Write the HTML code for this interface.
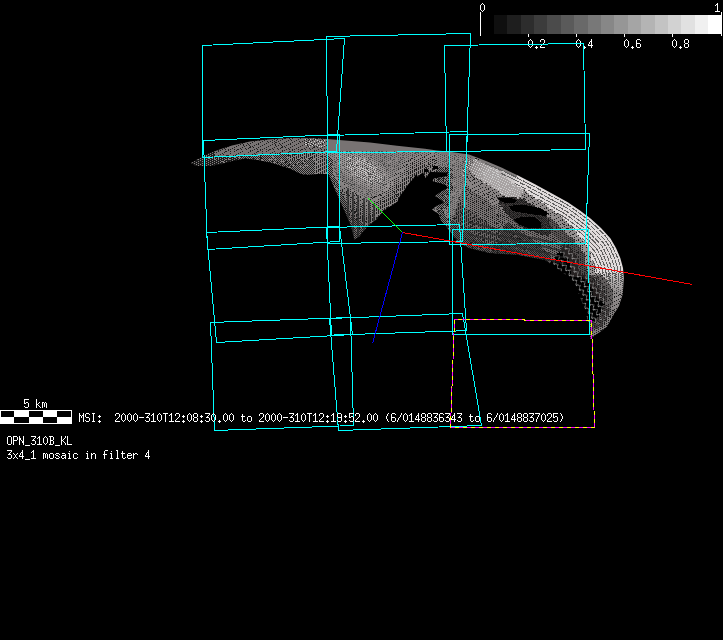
<!DOCTYPE html><html><head><meta charset="utf-8"><title>MSI mosaic</title>
<style>html,body{margin:0;padding:0;background:#000;overflow:hidden}body{width:723px;height:640px;font-family:"Liberation Mono",monospace}svg{display:block;position:absolute;left:0;top:0}</style></head><body>
<svg width="723" height="640" viewBox="0 0 723 640" shape-rendering="crispEdges">
<defs><path id="g40" d="M3 2h1v1h-1zM2 3h1v1h-1zM2 4h1v1h-1zM1 5h1v1h-1zM1 6h1v1h-1zM1 7h1v1h-1zM2 8h1v1h-1zM2 9h1v1h-1zM3 10h1v1h-1z"/><path id="g41" d="M1 2h1v1h-1zM2 3h1v1h-1zM2 4h1v1h-1zM3 5h1v1h-1zM3 6h1v1h-1zM3 7h1v1h-1zM2 8h1v1h-1zM2 9h1v1h-1zM1 10h1v1h-1z"/><path id="g45" d="M0 6h5v1h-5z"/><path id="g46" d="M2 9h1v1h-1zM1 10h3v1h-3zM2 11h1v1h-1z"/><path id="g47" d="M4 2h1v1h-1zM4 3h1v1h-1zM3 4h1v1h-1zM3 5h1v1h-1zM2 6h1v1h-1zM1 7h1v1h-1zM1 8h1v1h-1zM0 9h1v1h-1zM0 10h1v1h-1z"/><path id="g48" d="M2 2h1v1h-1zM1 3h1v1h-1zM3 3h1v1h-1zM0 4h1v1h-1zM4 4h1v1h-1zM0 5h1v1h-1zM4 5h1v1h-1zM0 6h1v1h-1zM4 6h1v1h-1zM0 7h1v1h-1zM4 7h1v1h-1zM0 8h1v1h-1zM4 8h1v1h-1zM1 9h1v1h-1zM3 9h1v1h-1zM2 10h1v1h-1z"/><path id="g49" d="M2 2h1v1h-1zM1 3h2v1h-2zM0 4h1v1h-1zM2 4h1v1h-1zM2 5h1v1h-1zM2 6h1v1h-1zM2 7h1v1h-1zM2 8h1v1h-1zM2 9h1v1h-1zM0 10h5v1h-5z"/><path id="g50" d="M1 2h3v1h-3zM0 3h1v1h-1zM4 3h1v1h-1zM0 4h1v1h-1zM4 4h1v1h-1zM4 5h1v1h-1zM3 6h1v1h-1zM2 7h1v1h-1zM1 8h1v1h-1zM0 9h1v1h-1zM0 10h5v1h-5z"/><path id="g51" d="M0 2h5v1h-5zM4 3h1v1h-1zM3 4h1v1h-1zM2 5h1v1h-1zM1 6h3v1h-3zM4 7h1v1h-1zM4 8h1v1h-1zM0 9h1v1h-1zM4 9h1v1h-1zM1 10h3v1h-3z"/><path id="g52" d="M3 2h1v1h-1zM3 3h1v1h-1zM2 4h2v1h-2zM1 5h1v1h-1zM3 5h1v1h-1zM1 6h1v1h-1zM3 6h1v1h-1zM0 7h1v1h-1zM3 7h1v1h-1zM0 8h5v1h-5zM3 9h1v1h-1zM3 10h1v1h-1z"/><path id="g53" d="M0 2h5v1h-5zM0 3h1v1h-1zM0 4h1v1h-1zM0 5h1v1h-1zM2 5h2v1h-2zM0 6h2v1h-2zM4 6h1v1h-1zM4 7h1v1h-1zM4 8h1v1h-1zM0 9h1v1h-1zM4 9h1v1h-1zM1 10h3v1h-3z"/><path id="g54" d="M1 2h3v1h-3zM0 3h1v1h-1zM4 3h1v1h-1zM0 4h1v1h-1zM0 5h1v1h-1zM0 6h4v1h-4zM0 7h1v1h-1zM4 7h1v1h-1zM0 8h1v1h-1zM4 8h1v1h-1zM0 9h1v1h-1zM4 9h1v1h-1zM1 10h3v1h-3z"/><path id="g55" d="M0 2h5v1h-5zM4 3h1v1h-1zM3 4h1v1h-1zM3 5h1v1h-1zM2 6h1v1h-1zM2 7h1v1h-1zM1 8h1v1h-1zM1 9h1v1h-1zM1 10h1v1h-1z"/><path id="g56" d="M1 2h3v1h-3zM0 3h1v1h-1zM4 3h1v1h-1zM0 4h1v1h-1zM4 4h1v1h-1zM0 5h1v1h-1zM4 5h1v1h-1zM1 6h3v1h-3zM0 7h1v1h-1zM4 7h1v1h-1zM0 8h1v1h-1zM4 8h1v1h-1zM0 9h1v1h-1zM4 9h1v1h-1zM1 10h3v1h-3z"/><path id="g57" d="M1 2h3v1h-3zM0 3h1v1h-1zM4 3h1v1h-1zM0 4h1v1h-1zM4 4h1v1h-1zM0 5h1v1h-1zM4 5h1v1h-1zM1 6h4v1h-4zM4 7h1v1h-1zM4 8h1v1h-1zM0 9h1v1h-1zM4 9h1v1h-1zM1 10h3v1h-3z"/><path id="g58" d="M2 4h1v1h-1zM1 5h3v1h-3zM2 6h1v1h-1zM2 9h1v1h-1zM1 10h3v1h-3zM2 11h1v1h-1z"/><path id="g66" d="M0 2h4v1h-4zM1 3h1v1h-1zM4 3h1v1h-1zM1 4h1v1h-1zM4 4h1v1h-1zM1 5h1v1h-1zM4 5h1v1h-1zM1 6h3v1h-3zM1 7h1v1h-1zM4 7h1v1h-1zM1 8h1v1h-1zM4 8h1v1h-1zM1 9h1v1h-1zM4 9h1v1h-1zM0 10h4v1h-4z"/><path id="g73" d="M1 2h3v1h-3zM2 3h1v1h-1zM2 4h1v1h-1zM2 5h1v1h-1zM2 6h1v1h-1zM2 7h1v1h-1zM2 8h1v1h-1zM2 9h1v1h-1zM1 10h3v1h-3z"/><path id="g75" d="M0 2h1v1h-1zM4 2h1v1h-1zM0 3h1v1h-1zM4 3h1v1h-1zM0 4h1v1h-1zM3 4h1v1h-1zM0 5h1v1h-1zM2 5h1v1h-1zM0 6h2v1h-2zM0 7h1v1h-1zM2 7h1v1h-1zM0 8h1v1h-1zM3 8h1v1h-1zM0 9h1v1h-1zM4 9h1v1h-1zM0 10h1v1h-1zM4 10h1v1h-1z"/><path id="g76" d="M0 2h1v1h-1zM0 3h1v1h-1zM0 4h1v1h-1zM0 5h1v1h-1zM0 6h1v1h-1zM0 7h1v1h-1zM0 8h1v1h-1zM0 9h1v1h-1zM0 10h5v1h-5z"/><path id="g77" d="M0 2h1v1h-1zM4 2h1v1h-1zM0 3h1v1h-1zM4 3h1v1h-1zM0 4h2v1h-2zM3 4h2v1h-2zM0 5h1v1h-1zM2 5h1v1h-1zM4 5h1v1h-1zM0 6h1v1h-1zM2 6h1v1h-1zM4 6h1v1h-1zM0 7h1v1h-1zM4 7h1v1h-1zM0 8h1v1h-1zM4 8h1v1h-1zM0 9h1v1h-1zM4 9h1v1h-1zM0 10h1v1h-1zM4 10h1v1h-1z"/><path id="g78" d="M0 2h1v1h-1zM4 2h1v1h-1zM0 3h1v1h-1zM4 3h1v1h-1zM0 4h2v1h-2zM4 4h1v1h-1zM0 5h2v1h-2zM4 5h1v1h-1zM0 6h1v1h-1zM2 6h1v1h-1zM4 6h1v1h-1zM0 7h1v1h-1zM3 7h2v1h-2zM0 8h1v1h-1zM3 8h2v1h-2zM0 9h1v1h-1zM4 9h1v1h-1zM0 10h1v1h-1zM4 10h1v1h-1z"/><path id="g79" d="M1 2h3v1h-3zM0 3h1v1h-1zM4 3h1v1h-1zM0 4h1v1h-1zM4 4h1v1h-1zM0 5h1v1h-1zM4 5h1v1h-1zM0 6h1v1h-1zM4 6h1v1h-1zM0 7h1v1h-1zM4 7h1v1h-1zM0 8h1v1h-1zM4 8h1v1h-1zM0 9h1v1h-1zM4 9h1v1h-1zM1 10h3v1h-3z"/><path id="g80" d="M0 2h4v1h-4zM0 3h1v1h-1zM4 3h1v1h-1zM0 4h1v1h-1zM4 4h1v1h-1zM0 5h1v1h-1zM4 5h1v1h-1zM0 6h4v1h-4zM0 7h1v1h-1zM0 8h1v1h-1zM0 9h1v1h-1zM0 10h1v1h-1z"/><path id="g83" d="M1 2h3v1h-3zM0 3h1v1h-1zM4 3h1v1h-1zM0 4h1v1h-1zM0 5h1v1h-1zM1 6h3v1h-3zM4 7h1v1h-1zM4 8h1v1h-1zM0 9h1v1h-1zM4 9h1v1h-1zM1 10h3v1h-3z"/><path id="g84" d="M0 2h5v1h-5zM2 3h1v1h-1zM2 4h1v1h-1zM2 5h1v1h-1zM2 6h1v1h-1zM2 7h1v1h-1zM2 8h1v1h-1zM2 9h1v1h-1zM2 10h1v1h-1z"/><path id="g95" d="M0 11h5v1h-5z"/><path id="g97" d="M1 5h3v1h-3zM4 6h1v1h-1zM1 7h4v1h-4zM0 8h1v1h-1zM4 8h1v1h-1zM0 9h1v1h-1zM3 9h2v1h-2zM1 10h2v1h-2zM4 10h1v1h-1z"/><path id="g99" d="M1 5h3v1h-3zM0 6h1v1h-1zM4 6h1v1h-1zM0 7h1v1h-1zM0 8h1v1h-1zM0 9h1v1h-1zM4 9h1v1h-1zM1 10h3v1h-3z"/><path id="g101" d="M1 5h3v1h-3zM0 6h1v1h-1zM4 6h1v1h-1zM0 7h5v1h-5zM0 8h1v1h-1zM0 9h1v1h-1zM4 9h1v1h-1zM1 10h3v1h-3z"/><path id="g102" d="M2 2h3v1h-3zM1 3h1v1h-1zM1 4h1v1h-1zM1 5h1v1h-1zM0 6h4v1h-4zM1 7h1v1h-1zM1 8h1v1h-1zM1 9h1v1h-1zM1 10h1v1h-1z"/><path id="g105" d="M2 3h1v1h-1zM1 5h2v1h-2zM2 6h1v1h-1zM2 7h1v1h-1zM2 8h1v1h-1zM2 9h1v1h-1zM1 10h3v1h-3z"/><path id="g107" d="M0 2h1v1h-1zM0 3h1v1h-1zM0 4h1v1h-1zM0 5h1v1h-1zM3 5h1v1h-1zM0 6h1v1h-1zM2 6h1v1h-1zM0 7h2v1h-2zM0 8h1v1h-1zM2 8h1v1h-1zM0 9h1v1h-1zM3 9h1v1h-1zM0 10h1v1h-1zM4 10h1v1h-1z"/><path id="g108" d="M1 2h2v1h-2zM2 3h1v1h-1zM2 4h1v1h-1zM2 5h1v1h-1zM2 6h1v1h-1zM2 7h1v1h-1zM2 8h1v1h-1zM2 9h1v1h-1zM1 10h3v1h-3z"/><path id="g109" d="M0 5h2v1h-2zM3 5h1v1h-1zM0 6h1v1h-1zM2 6h1v1h-1zM4 6h1v1h-1zM0 7h1v1h-1zM2 7h1v1h-1zM4 7h1v1h-1zM0 8h1v1h-1zM2 8h1v1h-1zM4 8h1v1h-1zM0 9h1v1h-1zM2 9h1v1h-1zM4 9h1v1h-1zM0 10h1v1h-1zM4 10h1v1h-1z"/><path id="g110" d="M0 5h1v1h-1zM2 5h2v1h-2zM0 6h2v1h-2zM4 6h1v1h-1zM0 7h1v1h-1zM4 7h1v1h-1zM0 8h1v1h-1zM4 8h1v1h-1zM0 9h1v1h-1zM4 9h1v1h-1zM0 10h1v1h-1zM4 10h1v1h-1z"/><path id="g111" d="M1 5h3v1h-3zM0 6h1v1h-1zM4 6h1v1h-1zM0 7h1v1h-1zM4 7h1v1h-1zM0 8h1v1h-1zM4 8h1v1h-1zM0 9h1v1h-1zM4 9h1v1h-1zM1 10h3v1h-3z"/><path id="g114" d="M0 5h1v1h-1zM2 5h2v1h-2zM0 6h2v1h-2zM4 6h1v1h-1zM0 7h1v1h-1zM0 8h1v1h-1zM0 9h1v1h-1zM0 10h1v1h-1z"/><path id="g115" d="M1 5h3v1h-3zM0 6h1v1h-1zM4 6h1v1h-1zM1 7h2v1h-2zM3 8h1v1h-1zM0 9h1v1h-1zM4 9h1v1h-1zM1 10h3v1h-3z"/><path id="g116" d="M1 3h1v1h-1zM1 4h1v1h-1zM0 5h4v1h-4zM1 6h1v1h-1zM1 7h1v1h-1zM1 8h1v1h-1zM1 9h1v1h-1zM4 9h1v1h-1zM2 10h2v1h-2z"/><path id="g120" d="M0 5h1v1h-1zM4 5h1v1h-1zM1 6h1v1h-1zM3 6h1v1h-1zM2 7h1v1h-1zM2 8h1v1h-1zM1 9h1v1h-1zM3 9h1v1h-1zM0 10h1v1h-1zM4 10h1v1h-1z"/><pattern id="s0" width="32" height="32" patternUnits="userSpaceOnUse"><path d="M0 0h1v1h-1zM8 0h2v1h-2zM13 0h1v1h-1zM16 0h1v1h-1zM19 0h2v1h-2zM24 0h1v1h-1zM26 0h1v1h-1zM3 1h1v1h-1zM6 1h1v1h-1zM14 1h1v1h-1zM22 1h1v1h-1zM24 1h1v1h-1zM30 1h1v1h-1zM4 2h1v1h-1zM7 2h2v1h-2zM12 2h1v1h-1zM20 2h1v1h-1zM27 2h2v1h-2zM2 3h1v1h-1zM4 3h1v1h-1zM10 3h1v1h-1zM16 3h1v1h-1zM18 3h1v1h-1zM26 3h1v1h-1zM28 3h2v1h-2zM0 4h1v1h-1zM8 4h1v1h-1zM12 4h1v1h-1zM16 4h1v1h-1zM22 4h3v1h-3zM6 5h1v1h-1zM8 5h1v1h-1zM14 5h1v1h-1zM19 5h1v1h-1zM21 5h2v1h-2zM30 5h1v1h-1zM4 6h1v1h-1zM11 6h2v1h-2zM20 6h1v1h-1zM28 6h1v1h-1zM2 7h1v1h-1zM10 7h1v1h-1zM13 7h1v1h-1zM18 7h1v1h-1zM26 7h1v1h-1zM0 8h2v1h-2zM6 8h1v1h-1zM8 8h1v1h-1zM16 8h1v1h-1zM25 8h1v1h-1zM6 9h1v1h-1zM14 9h1v1h-1zM22 9h1v1h-1zM30 9h1v1h-1zM1 10h1v1h-1zM4 10h1v1h-1zM12 10h1v1h-1zM20 10h1v1h-1zM28 10h2v1h-2zM2 11h1v1h-1zM10 11h1v1h-1zM18 11h1v1h-1zM21 11h1v1h-1zM26 11h1v1h-1zM0 12h1v1h-1zM3 12h1v1h-1zM8 12h1v1h-1zM16 12h1v1h-1zM20 12h1v1h-1zM24 12h1v1h-1zM6 13h1v1h-1zM11 13h1v1h-1zM14 13h1v1h-1zM18 13h1v1h-1zM22 13h1v1h-1zM30 13h1v1h-1zM4 14h1v1h-1zM12 14h1v1h-1zM16 14h1v1h-1zM19 14h2v1h-2zM28 14h1v1h-1zM2 15h1v1h-1zM10 15h1v1h-1zM18 15h1v1h-1zM23 15h1v1h-1zM26 15h1v1h-1zM0 16h1v1h-1zM2 16h1v1h-1zM8 16h1v1h-1zM16 16h1v1h-1zM19 16h1v1h-1zM24 16h1v1h-1zM6 17h1v1h-1zM14 17h1v1h-1zM19 17h1v1h-1zM22 17h1v1h-1zM25 17h1v1h-1zM30 17h1v1h-1zM4 18h1v1h-1zM12 18h1v1h-1zM20 18h1v1h-1zM26 18h1v1h-1zM28 18h1v1h-1zM2 19h1v1h-1zM10 19h1v1h-1zM18 19h1v1h-1zM25 19h2v1h-2zM29 19h1v1h-1zM0 20h1v1h-1zM8 20h1v1h-1zM16 20h1v1h-1zM21 20h1v1h-1zM24 20h1v1h-1zM1 21h1v1h-1zM4 21h1v1h-1zM6 21h1v1h-1zM10 21h1v1h-1zM13 21h2v1h-2zM17 21h1v1h-1zM22 21h1v1h-1zM30 21h1v1h-1zM4 22h1v1h-1zM12 22h1v1h-1zM26 22h1v1h-1zM28 22h1v1h-1zM1 23h2v1h-2zM6 23h1v1h-1zM10 23h1v1h-1zM18 23h1v1h-1zM26 23h1v1h-1zM0 24h1v1h-1zM16 24h1v1h-1zM24 24h1v1h-1zM6 25h1v1h-1zM14 25h1v1h-1zM30 25h1v1h-1zM12 26h1v1h-1zM20 26h1v1h-1zM28 26h1v1h-1zM31 26h1v1h-1zM2 27h1v1h-1zM5 27h1v1h-1zM10 27h1v1h-1zM18 27h1v1h-1zM26 27h1v1h-1zM0 28h1v1h-1zM8 28h1v1h-1zM16 28h1v1h-1zM18 28h1v1h-1zM24 28h1v1h-1zM6 29h1v1h-1zM8 29h1v1h-1zM14 29h1v1h-1zM22 29h1v1h-1zM30 29h1v1h-1zM4 30h1v1h-1zM12 30h1v1h-1zM20 30h1v1h-1zM27 30h2v1h-2zM2 31h1v1h-1zM10 31h1v1h-1zM18 31h1v1h-1zM26 31h1v1h-1zM30 31h1v1h-1z" fill="#1c1c1c"/></pattern><pattern id="s1" width="32" height="32" patternUnits="userSpaceOnUse"><path d="M0 0h1v1h-1zM2 0h1v1h-1zM4 0h1v1h-1zM8 0h1v1h-1zM12 0h1v1h-1zM16 0h1v1h-1zM21 0h1v1h-1zM24 0h1v1h-1zM28 0h2v1h-2zM2 1h1v1h-1zM6 1h1v1h-1zM10 1h1v1h-1zM14 1h1v1h-1zM18 1h1v1h-1zM22 1h1v1h-1zM26 1h1v1h-1zM30 1h1v1h-1zM0 2h1v1h-1zM4 2h1v1h-1zM8 2h1v1h-1zM12 2h1v1h-1zM16 2h1v1h-1zM20 2h1v1h-1zM23 2h2v1h-2zM28 2h1v1h-1zM2 3h1v1h-1zM4 3h1v1h-1zM6 3h1v1h-1zM12 3h1v1h-1zM14 3h1v1h-1zM18 3h2v1h-2zM26 3h1v1h-1zM28 3h1v1h-1zM30 3h1v1h-1zM0 4h1v1h-1zM4 4h1v1h-1zM8 4h1v1h-1zM12 4h1v1h-1zM16 4h1v1h-1zM23 4h1v1h-1zM28 4h1v1h-1zM2 5h1v1h-1zM6 5h1v1h-1zM11 5h1v1h-1zM14 5h1v1h-1zM18 5h1v1h-1zM22 5h1v1h-1zM26 5h1v1h-1zM30 5h2v1h-2zM0 6h1v1h-1zM4 6h1v1h-1zM8 6h1v1h-1zM16 6h1v1h-1zM18 6h1v1h-1zM20 6h1v1h-1zM24 6h1v1h-1zM28 6h1v1h-1zM2 7h1v1h-1zM6 7h1v1h-1zM10 7h2v1h-2zM14 7h1v1h-1zM18 7h1v1h-1zM22 7h1v1h-1zM26 7h1v1h-1zM30 7h1v1h-1zM0 8h1v1h-1zM4 8h1v1h-1zM8 8h1v1h-1zM12 8h1v1h-1zM16 8h1v1h-1zM20 8h1v1h-1zM24 8h1v1h-1zM28 8h1v1h-1zM2 9h1v1h-1zM5 9h2v1h-2zM10 9h1v1h-1zM14 9h1v1h-1zM18 9h1v1h-1zM22 9h1v1h-1zM26 9h1v1h-1zM28 9h1v1h-1zM30 9h1v1h-1zM0 10h1v1h-1zM2 10h1v1h-1zM4 10h1v1h-1zM8 10h1v1h-1zM12 10h1v1h-1zM16 10h1v1h-1zM20 10h1v1h-1zM24 10h2v1h-2zM28 10h1v1h-1zM2 11h2v1h-2zM6 11h1v1h-1zM10 11h1v1h-1zM14 11h1v1h-1zM22 11h1v1h-1zM26 11h1v1h-1zM30 11h1v1h-1zM0 12h1v1h-1zM4 12h1v1h-1zM8 12h1v1h-1zM12 12h1v1h-1zM16 12h1v1h-1zM20 12h1v1h-1zM24 12h1v1h-1zM28 12h1v1h-1zM2 13h1v1h-1zM6 13h1v1h-1zM10 13h1v1h-1zM14 13h1v1h-1zM18 13h1v1h-1zM22 13h1v1h-1zM26 13h1v1h-1zM30 13h1v1h-1zM0 14h1v1h-1zM4 14h1v1h-1zM8 14h2v1h-2zM12 14h1v1h-1zM16 14h1v1h-1zM20 14h1v1h-1zM24 14h1v1h-1zM28 14h1v1h-1zM2 15h1v1h-1zM6 15h1v1h-1zM10 15h1v1h-1zM14 15h1v1h-1zM18 15h1v1h-1zM22 15h1v1h-1zM26 15h1v1h-1zM30 15h1v1h-1zM0 16h2v1h-2zM4 16h1v1h-1zM8 16h1v1h-1zM11 16h2v1h-2zM16 16h1v1h-1zM24 16h1v1h-1zM28 16h1v1h-1zM2 17h1v1h-1zM6 17h1v1h-1zM8 17h1v1h-1zM10 17h1v1h-1zM14 17h1v1h-1zM18 17h1v1h-1zM22 17h1v1h-1zM26 17h1v1h-1zM30 17h1v1h-1zM0 18h1v1h-1zM4 18h1v1h-1zM6 18h1v1h-1zM8 18h1v1h-1zM12 18h1v1h-1zM20 18h2v1h-2zM24 18h1v1h-1zM28 18h1v1h-1zM2 19h1v1h-1zM6 19h1v1h-1zM10 19h1v1h-1zM14 19h1v1h-1zM18 19h1v1h-1zM22 19h1v1h-1zM26 19h1v1h-1zM30 19h1v1h-1zM0 20h1v1h-1zM4 20h1v1h-1zM8 20h1v1h-1zM12 20h1v1h-1zM20 20h1v1h-1zM24 20h1v1h-1zM27 20h2v1h-2zM2 21h1v1h-1zM6 21h1v1h-1zM10 21h1v1h-1zM14 21h1v1h-1zM18 21h1v1h-1zM22 21h1v1h-1zM26 21h1v1h-1zM30 21h1v1h-1zM0 22h1v1h-1zM4 22h2v1h-2zM8 22h1v1h-1zM12 22h1v1h-1zM16 22h2v1h-2zM20 22h1v1h-1zM24 22h1v1h-1zM28 22h1v1h-1zM2 23h1v1h-1zM6 23h1v1h-1zM10 23h1v1h-1zM14 23h1v1h-1zM17 23h2v1h-2zM20 23h1v1h-1zM22 23h1v1h-1zM26 23h1v1h-1zM30 23h1v1h-1zM4 24h1v1h-1zM7 24h2v1h-2zM12 24h1v1h-1zM16 24h1v1h-1zM18 24h1v1h-1zM20 24h1v1h-1zM23 24h2v1h-2zM28 24h1v1h-1zM2 25h1v1h-1zM6 25h1v1h-1zM10 25h1v1h-1zM12 25h1v1h-1zM14 25h1v1h-1zM18 25h1v1h-1zM22 25h1v1h-1zM26 25h2v1h-2zM30 25h1v1h-1zM0 26h1v1h-1zM4 26h1v1h-1zM8 26h1v1h-1zM12 26h1v1h-1zM16 26h1v1h-1zM20 26h1v1h-1zM24 26h1v1h-1zM28 26h1v1h-1zM2 27h1v1h-1zM6 27h1v1h-1zM10 27h1v1h-1zM14 27h1v1h-1zM17 27h2v1h-2zM22 27h1v1h-1zM26 27h1v1h-1zM30 27h1v1h-1zM0 28h3v1h-3zM4 28h2v1h-2zM8 28h1v1h-1zM12 28h1v1h-1zM16 28h1v1h-1zM20 28h1v1h-1zM24 28h1v1h-1zM28 28h1v1h-1zM2 29h1v1h-1zM6 29h1v1h-1zM10 29h1v1h-1zM14 29h1v1h-1zM18 29h2v1h-2zM22 29h1v1h-1zM30 29h1v1h-1zM0 30h1v1h-1zM4 30h1v1h-1zM8 30h1v1h-1zM12 30h1v1h-1zM14 30h1v1h-1zM16 30h1v1h-1zM20 30h1v1h-1zM22 30h1v1h-1zM24 30h1v1h-1zM28 30h1v1h-1zM6 31h1v1h-1zM10 31h1v1h-1zM14 31h1v1h-1zM16 31h3v1h-3zM22 31h1v1h-1zM26 31h1v1h-1zM30 31h1v1h-1z" fill="#1c1c1c"/></pattern><pattern id="s2" width="32" height="32" patternUnits="userSpaceOnUse"><path d="M0 0h1v1h-1zM2 0h1v1h-1zM4 0h1v1h-1zM6 0h1v1h-1zM8 0h1v1h-1zM10 0h1v1h-1zM12 0h1v1h-1zM16 0h1v1h-1zM18 0h1v1h-1zM20 0h1v1h-1zM24 0h3v1h-3zM28 0h1v1h-1zM0 1h1v1h-1zM2 1h1v1h-1zM6 1h1v1h-1zM8 1h1v1h-1zM10 1h1v1h-1zM14 1h1v1h-1zM16 1h1v1h-1zM18 1h1v1h-1zM22 1h1v1h-1zM24 1h1v1h-1zM26 1h1v1h-1zM30 1h1v1h-1zM0 2h1v1h-1zM4 2h1v1h-1zM6 2h1v1h-1zM8 2h1v1h-1zM11 2h4v1h-4zM16 2h1v1h-1zM20 2h1v1h-1zM22 2h3v1h-3zM30 2h1v1h-1zM2 3h1v1h-1zM4 3h1v1h-1zM6 3h1v1h-1zM10 3h1v1h-1zM12 3h1v1h-1zM14 3h1v1h-1zM17 3h2v1h-2zM22 3h1v1h-1zM26 3h1v1h-1zM28 3h1v1h-1zM0 4h1v1h-1zM2 4h1v1h-1zM4 4h1v1h-1zM8 4h1v1h-1zM10 4h1v1h-1zM12 4h2v1h-2zM16 4h1v1h-1zM18 4h1v1h-1zM20 4h1v1h-1zM24 4h1v1h-1zM26 4h1v1h-1zM28 4h1v1h-1zM0 5h1v1h-1zM2 5h1v1h-1zM6 5h1v1h-1zM8 5h1v1h-1zM10 5h1v1h-1zM14 5h1v1h-1zM16 5h1v1h-1zM18 5h1v1h-1zM22 5h1v1h-1zM26 5h1v1h-1zM30 5h1v1h-1zM0 6h1v1h-1zM4 6h1v1h-1zM6 6h1v1h-1zM8 6h1v1h-1zM11 6h2v1h-2zM14 6h1v1h-1zM16 6h1v1h-1zM18 6h1v1h-1zM20 6h1v1h-1zM22 6h1v1h-1zM24 6h1v1h-1zM28 6h1v1h-1zM30 6h1v1h-1zM2 7h1v1h-1zM4 7h1v1h-1zM6 7h1v1h-1zM9 7h2v1h-2zM14 7h1v1h-1zM18 7h2v1h-2zM22 7h1v1h-1zM26 7h1v1h-1zM28 7h1v1h-1zM30 7h1v1h-1zM0 8h1v1h-1zM2 8h1v1h-1zM4 8h1v1h-1zM8 8h1v1h-1zM10 8h1v1h-1zM12 8h1v1h-1zM16 8h1v1h-1zM18 8h1v1h-1zM20 8h1v1h-1zM24 8h1v1h-1zM26 8h1v1h-1zM28 8h1v1h-1zM0 9h1v1h-1zM2 9h1v1h-1zM6 9h1v1h-1zM8 9h1v1h-1zM10 9h1v1h-1zM16 9h3v1h-3zM24 9h1v1h-1zM26 9h1v1h-1zM30 9h2v1h-2zM0 10h1v1h-1zM4 10h1v1h-1zM6 10h1v1h-1zM8 10h1v1h-1zM12 10h1v1h-1zM14 10h1v1h-1zM16 10h1v1h-1zM20 10h1v1h-1zM22 10h1v1h-1zM24 10h1v1h-1zM28 10h1v1h-1zM30 10h1v1h-1zM2 11h1v1h-1zM4 11h1v1h-1zM6 11h1v1h-1zM10 11h1v1h-1zM12 11h1v1h-1zM14 11h1v1h-1zM18 11h1v1h-1zM20 11h1v1h-1zM22 11h2v1h-2zM26 11h1v1h-1zM28 11h1v1h-1zM30 11h1v1h-1zM0 12h1v1h-1zM2 12h1v1h-1zM4 12h1v1h-1zM8 12h1v1h-1zM10 12h1v1h-1zM12 12h1v1h-1zM16 12h1v1h-1zM18 12h1v1h-1zM20 12h1v1h-1zM24 12h1v1h-1zM26 12h1v1h-1zM28 12h1v1h-1zM0 13h1v1h-1zM2 13h1v1h-1zM8 13h1v1h-1zM10 13h1v1h-1zM14 13h1v1h-1zM16 13h1v1h-1zM18 13h1v1h-1zM22 13h1v1h-1zM24 13h1v1h-1zM26 13h1v1h-1zM30 13h1v1h-1zM0 14h1v1h-1zM4 14h1v1h-1zM6 14h1v1h-1zM8 14h1v1h-1zM12 14h1v1h-1zM14 14h1v1h-1zM16 14h1v1h-1zM20 14h1v1h-1zM22 14h1v1h-1zM24 14h1v1h-1zM28 14h1v1h-1zM30 14h1v1h-1zM2 15h3v1h-3zM6 15h1v1h-1zM10 15h1v1h-1zM12 15h1v1h-1zM14 15h1v1h-1zM18 15h1v1h-1zM20 15h1v1h-1zM22 15h1v1h-1zM26 15h1v1h-1zM28 15h1v1h-1zM30 15h1v1h-1zM0 16h1v1h-1zM2 16h3v1h-3zM8 16h1v1h-1zM10 16h1v1h-1zM12 16h1v1h-1zM16 16h1v1h-1zM20 16h1v1h-1zM24 16h1v1h-1zM28 16h1v1h-1zM0 17h1v1h-1zM2 17h1v1h-1zM4 17h1v1h-1zM6 17h1v1h-1zM8 17h1v1h-1zM10 17h1v1h-1zM14 17h1v1h-1zM16 17h1v1h-1zM18 17h1v1h-1zM22 17h1v1h-1zM24 17h1v1h-1zM26 17h2v1h-2zM30 17h1v1h-1zM0 18h1v1h-1zM4 18h1v1h-1zM6 18h1v1h-1zM8 18h1v1h-1zM12 18h1v1h-1zM14 18h1v1h-1zM20 18h1v1h-1zM22 18h1v1h-1zM24 18h1v1h-1zM26 18h1v1h-1zM28 18h1v1h-1zM31 18h1v1h-1zM2 19h3v1h-3zM10 19h1v1h-1zM12 19h1v1h-1zM14 19h2v1h-2zM18 19h1v1h-1zM20 19h1v1h-1zM22 19h1v1h-1zM26 19h1v1h-1zM28 19h1v1h-1zM30 19h2v1h-2zM2 20h2v1h-2zM8 20h1v1h-1zM10 20h1v1h-1zM12 20h2v1h-2zM16 20h1v1h-1zM18 20h1v1h-1zM20 20h1v1h-1zM24 20h1v1h-1zM26 20h1v1h-1zM28 20h1v1h-1zM0 21h1v1h-1zM2 21h1v1h-1zM6 21h1v1h-1zM8 21h1v1h-1zM10 21h1v1h-1zM13 21h2v1h-2zM16 21h1v1h-1zM18 21h1v1h-1zM22 21h1v1h-1zM24 21h1v1h-1zM26 21h1v1h-1zM30 21h1v1h-1zM0 22h1v1h-1zM4 22h3v1h-3zM8 22h2v1h-2zM12 22h1v1h-1zM14 22h1v1h-1zM16 22h1v1h-1zM20 22h1v1h-1zM22 22h1v1h-1zM28 22h1v1h-1zM30 22h1v1h-1zM2 23h1v1h-1zM4 23h1v1h-1zM6 23h1v1h-1zM10 23h1v1h-1zM12 23h1v1h-1zM14 23h1v1h-1zM18 23h1v1h-1zM20 23h1v1h-1zM22 23h1v1h-1zM26 23h1v1h-1zM28 23h1v1h-1zM30 23h1v1h-1zM0 24h1v1h-1zM2 24h1v1h-1zM4 24h1v1h-1zM8 24h1v1h-1zM10 24h1v1h-1zM12 24h1v1h-1zM16 24h1v1h-1zM18 24h1v1h-1zM20 24h1v1h-1zM26 24h1v1h-1zM28 24h1v1h-1zM0 25h1v1h-1zM2 25h1v1h-1zM6 25h1v1h-1zM8 25h1v1h-1zM10 25h1v1h-1zM14 25h1v1h-1zM16 25h1v1h-1zM18 25h1v1h-1zM22 25h1v1h-1zM24 25h3v1h-3zM0 26h1v1h-1zM4 26h5v1h-5zM10 26h1v1h-1zM12 26h1v1h-1zM14 26h1v1h-1zM16 26h1v1h-1zM18 26h1v1h-1zM20 26h1v1h-1zM22 26h1v1h-1zM24 26h1v1h-1zM28 26h1v1h-1zM30 26h1v1h-1zM1 27h2v1h-2zM4 27h1v1h-1zM6 27h1v1h-1zM10 27h1v1h-1zM12 27h1v1h-1zM14 27h1v1h-1zM18 27h1v1h-1zM20 27h1v1h-1zM22 27h1v1h-1zM26 27h1v1h-1zM28 27h1v1h-1zM30 27h2v1h-2zM0 28h1v1h-1zM2 28h1v1h-1zM4 28h1v1h-1zM8 28h1v1h-1zM10 28h1v1h-1zM12 28h1v1h-1zM16 28h1v1h-1zM18 28h1v1h-1zM20 28h1v1h-1zM24 28h1v1h-1zM26 28h1v1h-1zM28 28h1v1h-1zM0 29h1v1h-1zM2 29h1v1h-1zM5 29h2v1h-2zM8 29h1v1h-1zM10 29h1v1h-1zM13 29h2v1h-2zM16 29h1v1h-1zM18 29h1v1h-1zM22 29h3v1h-3zM26 29h1v1h-1zM29 29h2v1h-2zM0 30h1v1h-1zM4 30h1v1h-1zM6 30h1v1h-1zM8 30h1v1h-1zM12 30h1v1h-1zM14 30h1v1h-1zM16 30h1v1h-1zM20 30h3v1h-3zM24 30h1v1h-1zM28 30h1v1h-1zM30 30h1v1h-1zM2 31h1v1h-1zM4 31h1v1h-1zM6 31h1v1h-1zM9 31h2v1h-2zM12 31h1v1h-1zM18 31h1v1h-1zM20 31h1v1h-1zM22 31h1v1h-1zM26 31h1v1h-1zM28 31h1v1h-1zM30 31h1v1h-1z" fill="#1c1c1c"/></pattern><pattern id="s3" width="32" height="32" patternUnits="userSpaceOnUse"><path d="M0 0h1v1h-1zM2 0h1v1h-1zM4 0h1v1h-1zM6 0h1v1h-1zM8 0h1v1h-1zM10 0h1v1h-1zM12 0h1v1h-1zM14 0h1v1h-1zM16 0h1v1h-1zM18 0h1v1h-1zM20 0h1v1h-1zM22 0h1v1h-1zM24 0h1v1h-1zM26 0h1v1h-1zM28 0h1v1h-1zM30 0h1v1h-1zM1 1h1v1h-1zM3 1h1v1h-1zM5 1h1v1h-1zM7 1h1v1h-1zM9 1h1v1h-1zM11 1h1v1h-1zM13 1h1v1h-1zM16 1h2v1h-2zM19 1h1v1h-1zM21 1h1v1h-1zM23 1h1v1h-1zM25 1h1v1h-1zM27 1h1v1h-1zM29 1h1v1h-1zM31 1h1v1h-1zM0 2h1v1h-1zM2 2h1v1h-1zM4 2h1v1h-1zM6 2h1v1h-1zM8 2h1v1h-1zM12 2h1v1h-1zM14 2h1v1h-1zM18 2h1v1h-1zM20 2h1v1h-1zM22 2h1v1h-1zM24 2h1v1h-1zM26 2h1v1h-1zM28 2h1v1h-1zM30 2h2v1h-2zM0 3h2v1h-2zM3 3h1v1h-1zM5 3h1v1h-1zM7 3h1v1h-1zM10 3h2v1h-2zM13 3h3v1h-3zM17 3h1v1h-1zM19 3h1v1h-1zM21 3h1v1h-1zM23 3h1v1h-1zM25 3h3v1h-3zM29 3h1v1h-1zM31 3h1v1h-1zM2 4h1v1h-1zM4 4h1v1h-1zM6 4h3v1h-3zM10 4h1v1h-1zM12 4h1v1h-1zM14 4h1v1h-1zM16 4h1v1h-1zM18 4h1v1h-1zM20 4h1v1h-1zM22 4h1v1h-1zM24 4h1v1h-1zM26 4h1v1h-1zM28 4h1v1h-1zM30 4h1v1h-1zM1 5h1v1h-1zM3 5h1v1h-1zM7 5h1v1h-1zM9 5h1v1h-1zM11 5h1v1h-1zM13 5h1v1h-1zM15 5h1v1h-1zM21 5h1v1h-1zM23 5h1v1h-1zM25 5h1v1h-1zM27 5h1v1h-1zM29 5h1v1h-1zM31 5h1v1h-1zM0 6h1v1h-1zM3 6h2v1h-2zM6 6h1v1h-1zM8 6h1v1h-1zM10 6h1v1h-1zM14 6h1v1h-1zM16 6h1v1h-1zM18 6h1v1h-1zM20 6h1v1h-1zM22 6h1v1h-1zM24 6h1v1h-1zM26 6h1v1h-1zM28 6h1v1h-1zM30 6h1v1h-1zM1 7h1v1h-1zM3 7h1v1h-1zM5 7h1v1h-1zM7 7h1v1h-1zM9 7h1v1h-1zM11 7h1v1h-1zM13 7h1v1h-1zM17 7h1v1h-1zM19 7h1v1h-1zM21 7h1v1h-1zM23 7h1v1h-1zM25 7h1v1h-1zM27 7h1v1h-1zM29 7h1v1h-1zM31 7h1v1h-1zM0 8h1v1h-1zM2 8h1v1h-1zM4 8h1v1h-1zM6 8h1v1h-1zM8 8h1v1h-1zM10 8h1v1h-1zM12 8h1v1h-1zM14 8h1v1h-1zM16 8h1v1h-1zM18 8h1v1h-1zM20 8h1v1h-1zM22 8h1v1h-1zM24 8h1v1h-1zM26 8h1v1h-1zM29 8h2v1h-2zM1 9h1v1h-1zM3 9h1v1h-1zM5 9h1v1h-1zM7 9h1v1h-1zM9 9h1v1h-1zM11 9h1v1h-1zM13 9h1v1h-1zM15 9h1v1h-1zM17 9h1v1h-1zM19 9h1v1h-1zM21 9h1v1h-1zM23 9h1v1h-1zM25 9h1v1h-1zM27 9h1v1h-1zM29 9h1v1h-1zM31 9h1v1h-1zM0 10h3v1h-3zM4 10h1v1h-1zM6 10h1v1h-1zM8 10h1v1h-1zM10 10h1v1h-1zM12 10h1v1h-1zM14 10h1v1h-1zM16 10h1v1h-1zM18 10h1v1h-1zM20 10h1v1h-1zM22 10h1v1h-1zM24 10h1v1h-1zM26 10h1v1h-1zM28 10h1v1h-1zM30 10h1v1h-1zM1 11h1v1h-1zM5 11h1v1h-1zM7 11h1v1h-1zM9 11h1v1h-1zM11 11h1v1h-1zM13 11h1v1h-1zM15 11h1v1h-1zM17 11h1v1h-1zM19 11h1v1h-1zM21 11h1v1h-1zM23 11h1v1h-1zM25 11h1v1h-1zM27 11h1v1h-1zM29 11h1v1h-1zM31 11h1v1h-1zM0 12h1v1h-1zM6 12h1v1h-1zM8 12h1v1h-1zM10 12h1v1h-1zM12 12h1v1h-1zM14 12h1v1h-1zM16 12h1v1h-1zM18 12h1v1h-1zM20 12h1v1h-1zM22 12h1v1h-1zM24 12h1v1h-1zM26 12h1v1h-1zM28 12h1v1h-1zM30 12h2v1h-2zM1 13h1v1h-1zM3 13h1v1h-1zM5 13h1v1h-1zM7 13h1v1h-1zM9 13h1v1h-1zM11 13h1v1h-1zM13 13h1v1h-1zM15 13h1v1h-1zM17 13h1v1h-1zM19 13h1v1h-1zM21 13h1v1h-1zM23 13h1v1h-1zM25 13h1v1h-1zM27 13h1v1h-1zM29 13h1v1h-1zM31 13h1v1h-1zM0 14h3v1h-3zM4 14h5v1h-5zM10 14h1v1h-1zM12 14h1v1h-1zM14 14h1v1h-1zM16 14h3v1h-3zM20 14h1v1h-1zM22 14h1v1h-1zM24 14h1v1h-1zM26 14h1v1h-1zM30 14h1v1h-1zM1 15h1v1h-1zM3 15h1v1h-1zM5 15h1v1h-1zM7 15h3v1h-3zM11 15h1v1h-1zM13 15h1v1h-1zM15 15h1v1h-1zM17 15h1v1h-1zM19 15h1v1h-1zM21 15h1v1h-1zM23 15h1v1h-1zM25 15h1v1h-1zM27 15h1v1h-1zM29 15h1v1h-1zM31 15h1v1h-1zM0 16h1v1h-1zM2 16h1v1h-1zM4 16h1v1h-1zM6 16h1v1h-1zM10 16h1v1h-1zM14 16h1v1h-1zM16 16h1v1h-1zM18 16h1v1h-1zM20 16h1v1h-1zM22 16h1v1h-1zM24 16h3v1h-3zM28 16h1v1h-1zM30 16h1v1h-1zM1 17h1v1h-1zM3 17h1v1h-1zM5 17h1v1h-1zM7 17h3v1h-3zM11 17h1v1h-1zM13 17h1v1h-1zM15 17h1v1h-1zM17 17h1v1h-1zM19 17h1v1h-1zM21 17h1v1h-1zM25 17h1v1h-1zM27 17h1v1h-1zM31 17h1v1h-1zM0 18h1v1h-1zM2 18h1v1h-1zM4 18h1v1h-1zM6 18h3v1h-3zM10 18h1v1h-1zM12 18h1v1h-1zM14 18h1v1h-1zM16 18h1v1h-1zM18 18h1v1h-1zM20 18h1v1h-1zM22 18h3v1h-3zM26 18h3v1h-3zM30 18h1v1h-1zM1 19h1v1h-1zM3 19h1v1h-1zM5 19h1v1h-1zM7 19h1v1h-1zM9 19h1v1h-1zM11 19h1v1h-1zM13 19h1v1h-1zM15 19h1v1h-1zM17 19h1v1h-1zM19 19h1v1h-1zM21 19h3v1h-3zM25 19h1v1h-1zM27 19h1v1h-1zM29 19h1v1h-1zM0 20h1v1h-1zM2 20h1v1h-1zM4 20h1v1h-1zM6 20h1v1h-1zM8 20h1v1h-1zM12 20h1v1h-1zM14 20h1v1h-1zM16 20h1v1h-1zM18 20h1v1h-1zM20 20h1v1h-1zM22 20h1v1h-1zM24 20h1v1h-1zM26 20h2v1h-2zM30 20h1v1h-1zM1 21h1v1h-1zM3 21h1v1h-1zM5 21h1v1h-1zM7 21h1v1h-1zM9 21h1v1h-1zM11 21h1v1h-1zM13 21h1v1h-1zM15 21h1v1h-1zM17 21h1v1h-1zM19 21h1v1h-1zM21 21h1v1h-1zM23 21h1v1h-1zM25 21h1v1h-1zM27 21h1v1h-1zM29 21h1v1h-1zM31 21h1v1h-1zM0 22h1v1h-1zM2 22h1v1h-1zM4 22h1v1h-1zM6 22h1v1h-1zM8 22h1v1h-1zM10 22h1v1h-1zM12 22h1v1h-1zM14 22h1v1h-1zM16 22h1v1h-1zM18 22h1v1h-1zM20 22h1v1h-1zM22 22h1v1h-1zM24 22h1v1h-1zM26 22h1v1h-1zM28 22h2v1h-2zM0 23h2v1h-2zM3 23h1v1h-1zM5 23h1v1h-1zM7 23h1v1h-1zM9 23h1v1h-1zM11 23h1v1h-1zM13 23h2v1h-2zM17 23h1v1h-1zM19 23h1v1h-1zM21 23h1v1h-1zM23 23h3v1h-3zM27 23h1v1h-1zM29 23h1v1h-1zM31 23h1v1h-1zM0 24h1v1h-1zM2 24h1v1h-1zM6 24h1v1h-1zM8 24h1v1h-1zM10 24h1v1h-1zM12 24h1v1h-1zM14 24h1v1h-1zM16 24h1v1h-1zM18 24h1v1h-1zM20 24h1v1h-1zM22 24h1v1h-1zM24 24h1v1h-1zM26 24h1v1h-1zM28 24h1v1h-1zM1 25h1v1h-1zM3 25h1v1h-1zM5 25h1v1h-1zM7 25h1v1h-1zM9 25h1v1h-1zM11 25h3v1h-3zM15 25h1v1h-1zM17 25h1v1h-1zM19 25h1v1h-1zM21 25h1v1h-1zM23 25h1v1h-1zM25 25h1v1h-1zM27 25h1v1h-1zM29 25h1v1h-1zM31 25h1v1h-1zM0 26h1v1h-1zM2 26h1v1h-1zM4 26h1v1h-1zM6 26h1v1h-1zM8 26h1v1h-1zM12 26h1v1h-1zM16 26h1v1h-1zM18 26h1v1h-1zM20 26h1v1h-1zM24 26h1v1h-1zM26 26h1v1h-1zM28 26h1v1h-1zM30 26h1v1h-1zM0 27h2v1h-2zM3 27h3v1h-3zM7 27h1v1h-1zM9 27h1v1h-1zM11 27h1v1h-1zM13 27h1v1h-1zM15 27h1v1h-1zM17 27h1v1h-1zM19 27h1v1h-1zM21 27h1v1h-1zM23 27h1v1h-1zM25 27h1v1h-1zM27 27h1v1h-1zM29 27h1v1h-1zM31 27h1v1h-1zM0 28h1v1h-1zM2 28h1v1h-1zM4 28h1v1h-1zM6 28h1v1h-1zM8 28h1v1h-1zM10 28h1v1h-1zM12 28h1v1h-1zM14 28h1v1h-1zM18 28h1v1h-1zM20 28h1v1h-1zM22 28h1v1h-1zM24 28h1v1h-1zM26 28h1v1h-1zM28 28h1v1h-1zM30 28h1v1h-1zM1 29h1v1h-1zM3 29h1v1h-1zM5 29h1v1h-1zM7 29h1v1h-1zM9 29h1v1h-1zM11 29h1v1h-1zM13 29h1v1h-1zM15 29h1v1h-1zM19 29h1v1h-1zM21 29h1v1h-1zM23 29h1v1h-1zM25 29h1v1h-1zM27 29h1v1h-1zM29 29h1v1h-1zM0 30h1v1h-1zM2 30h1v1h-1zM4 30h1v1h-1zM6 30h1v1h-1zM8 30h1v1h-1zM10 30h1v1h-1zM12 30h1v1h-1zM14 30h1v1h-1zM16 30h1v1h-1zM18 30h1v1h-1zM20 30h1v1h-1zM22 30h1v1h-1zM24 30h1v1h-1zM26 30h1v1h-1zM28 30h1v1h-1zM30 30h1v1h-1zM1 31h1v1h-1zM3 31h1v1h-1zM5 31h1v1h-1zM7 31h1v1h-1zM9 31h1v1h-1zM11 31h1v1h-1zM17 31h1v1h-1zM21 31h1v1h-1zM23 31h1v1h-1zM27 31h1v1h-1zM29 31h1v1h-1zM31 31h1v1h-1z" fill="#1c1c1c"/></pattern><pattern id="s4" width="32" height="32" patternUnits="userSpaceOnUse"><path d="M0 0h3v1h-3zM4 0h1v1h-1zM8 0h3v1h-3zM12 0h1v1h-1zM14 0h1v1h-1zM17 0h2v1h-2zM20 0h1v1h-1zM22 0h1v1h-1zM24 0h2v1h-2zM28 0h1v1h-1zM30 0h1v1h-1zM1 1h1v1h-1zM3 1h1v1h-1zM5 1h1v1h-1zM7 1h1v1h-1zM9 1h1v1h-1zM11 1h1v1h-1zM13 1h1v1h-1zM15 1h3v1h-3zM19 1h1v1h-1zM21 1h1v1h-1zM23 1h1v1h-1zM29 1h3v1h-3zM0 2h1v1h-1zM3 2h4v1h-4zM8 2h1v1h-1zM10 2h1v1h-1zM12 2h3v1h-3zM16 2h1v1h-1zM20 2h3v1h-3zM24 2h1v1h-1zM26 2h1v1h-1zM28 2h3v1h-3zM1 3h1v1h-1zM5 3h1v1h-1zM7 3h1v1h-1zM9 3h1v1h-1zM11 3h5v1h-5zM17 3h1v1h-1zM19 3h1v1h-1zM21 3h1v1h-1zM23 3h1v1h-1zM25 3h1v1h-1zM27 3h1v1h-1zM29 3h1v1h-1zM31 3h1v1h-1zM0 4h3v1h-3zM4 4h1v1h-1zM6 4h1v1h-1zM8 4h3v1h-3zM12 4h1v1h-1zM14 4h1v1h-1zM16 4h3v1h-3zM20 4h1v1h-1zM22 4h1v1h-1zM24 4h3v1h-3zM28 4h1v1h-1zM30 4h1v1h-1zM0 5h2v1h-2zM3 5h1v1h-1zM5 5h1v1h-1zM7 5h1v1h-1zM9 5h1v1h-1zM11 5h1v1h-1zM13 5h1v1h-1zM15 5h1v1h-1zM17 5h1v1h-1zM19 5h1v1h-1zM21 5h1v1h-1zM23 5h1v1h-1zM25 5h1v1h-1zM27 5h1v1h-1zM29 5h1v1h-1zM31 5h1v1h-1zM0 6h1v1h-1zM2 6h1v1h-1zM5 6h2v1h-2zM8 6h1v1h-1zM10 6h4v1h-4zM16 6h1v1h-1zM18 6h5v1h-5zM24 6h1v1h-1zM28 6h3v1h-3zM3 7h1v1h-1zM5 7h1v1h-1zM7 7h1v1h-1zM9 7h1v1h-1zM11 7h1v1h-1zM13 7h1v1h-1zM15 7h1v1h-1zM17 7h1v1h-1zM19 7h1v1h-1zM23 7h1v1h-1zM25 7h1v1h-1zM27 7h1v1h-1zM29 7h1v1h-1zM31 7h1v1h-1zM0 8h3v1h-3zM4 8h1v1h-1zM6 8h1v1h-1zM8 8h3v1h-3zM12 8h1v1h-1zM14 8h1v1h-1zM16 8h3v1h-3zM22 8h1v1h-1zM24 8h3v1h-3zM28 8h1v1h-1zM30 8h1v1h-1zM1 9h1v1h-1zM3 9h1v1h-1zM5 9h1v1h-1zM7 9h1v1h-1zM9 9h1v1h-1zM11 9h1v1h-1zM13 9h3v1h-3zM17 9h1v1h-1zM19 9h3v1h-3zM23 9h1v1h-1zM25 9h1v1h-1zM27 9h1v1h-1zM29 9h1v1h-1zM31 9h1v1h-1zM0 10h1v1h-1zM2 10h1v1h-1zM4 10h3v1h-3zM8 10h1v1h-1zM10 10h1v1h-1zM12 10h3v1h-3zM16 10h1v1h-1zM18 10h1v1h-1zM20 10h2v1h-2zM24 10h1v1h-1zM26 10h5v1h-5zM1 11h1v1h-1zM3 11h1v1h-1zM5 11h1v1h-1zM7 11h1v1h-1zM11 11h1v1h-1zM15 11h1v1h-1zM17 11h1v1h-1zM19 11h1v1h-1zM21 11h1v1h-1zM23 11h3v1h-3zM27 11h1v1h-1zM29 11h1v1h-1zM31 11h1v1h-1zM0 12h3v1h-3zM4 12h1v1h-1zM6 12h1v1h-1zM8 12h3v1h-3zM12 12h1v1h-1zM14 12h1v1h-1zM16 12h3v1h-3zM20 12h1v1h-1zM25 12h2v1h-2zM28 12h1v1h-1zM30 12h1v1h-1zM1 13h1v1h-1zM3 13h1v1h-1zM5 13h1v1h-1zM7 13h1v1h-1zM9 13h1v1h-1zM11 13h1v1h-1zM13 13h1v1h-1zM15 13h1v1h-1zM17 13h1v1h-1zM19 13h1v1h-1zM25 13h1v1h-1zM29 13h1v1h-1zM31 13h1v1h-1zM0 14h1v1h-1zM2 14h1v1h-1zM4 14h3v1h-3zM8 14h1v1h-1zM10 14h1v1h-1zM12 14h2v1h-2zM16 14h1v1h-1zM18 14h1v1h-1zM20 14h3v1h-3zM24 14h1v1h-1zM26 14h1v1h-1zM28 14h1v1h-1zM30 14h1v1h-1zM1 15h1v1h-1zM3 15h1v1h-1zM5 15h1v1h-1zM7 15h1v1h-1zM9 15h1v1h-1zM11 15h1v1h-1zM13 15h1v1h-1zM17 15h1v1h-1zM21 15h1v1h-1zM23 15h1v1h-1zM25 15h1v1h-1zM27 15h1v1h-1zM0 16h3v1h-3zM4 16h2v1h-2zM8 16h3v1h-3zM12 16h1v1h-1zM14 16h1v1h-1zM16 16h3v1h-3zM22 16h1v1h-1zM24 16h3v1h-3zM28 16h1v1h-1zM30 16h1v1h-1zM1 17h1v1h-1zM3 17h1v1h-1zM5 17h1v1h-1zM7 17h1v1h-1zM9 17h1v1h-1zM11 17h1v1h-1zM13 17h1v1h-1zM17 17h1v1h-1zM19 17h1v1h-1zM21 17h1v1h-1zM23 17h1v1h-1zM25 17h1v1h-1zM27 17h1v1h-1zM29 17h1v1h-1zM31 17h1v1h-1zM0 18h1v1h-1zM2 18h1v1h-1zM4 18h3v1h-3zM8 18h1v1h-1zM10 18h1v1h-1zM12 18h2v1h-2zM15 18h2v1h-2zM18 18h1v1h-1zM20 18h3v1h-3zM24 18h3v1h-3zM28 18h3v1h-3zM1 19h1v1h-1zM3 19h1v1h-1zM5 19h1v1h-1zM7 19h1v1h-1zM9 19h1v1h-1zM11 19h1v1h-1zM13 19h1v1h-1zM15 19h1v1h-1zM17 19h5v1h-5zM23 19h1v1h-1zM25 19h1v1h-1zM27 19h1v1h-1zM29 19h1v1h-1zM31 19h1v1h-1zM0 20h3v1h-3zM4 20h1v1h-1zM6 20h1v1h-1zM8 20h2v1h-2zM12 20h1v1h-1zM14 20h1v1h-1zM16 20h3v1h-3zM20 20h1v1h-1zM22 20h5v1h-5zM28 20h3v1h-3zM1 21h1v1h-1zM3 21h1v1h-1zM5 21h1v1h-1zM7 21h1v1h-1zM9 21h1v1h-1zM11 21h1v1h-1zM13 21h1v1h-1zM15 21h1v1h-1zM17 21h1v1h-1zM19 21h1v1h-1zM21 21h1v1h-1zM23 21h1v1h-1zM25 21h1v1h-1zM27 21h1v1h-1zM29 21h1v1h-1zM31 21h1v1h-1zM0 22h1v1h-1zM2 22h1v1h-1zM4 22h3v1h-3zM8 22h3v1h-3zM12 22h3v1h-3zM16 22h1v1h-1zM18 22h1v1h-1zM20 22h3v1h-3zM24 22h1v1h-1zM26 22h1v1h-1zM28 22h3v1h-3zM1 23h1v1h-1zM3 23h1v1h-1zM5 23h1v1h-1zM7 23h1v1h-1zM9 23h1v1h-1zM11 23h1v1h-1zM13 23h3v1h-3zM17 23h1v1h-1zM19 23h1v1h-1zM21 23h1v1h-1zM23 23h1v1h-1zM25 23h1v1h-1zM27 23h1v1h-1zM29 23h1v1h-1zM31 23h1v1h-1zM0 24h3v1h-3zM4 24h1v1h-1zM6 24h1v1h-1zM8 24h3v1h-3zM12 24h1v1h-1zM14 24h1v1h-1zM16 24h3v1h-3zM20 24h1v1h-1zM22 24h1v1h-1zM24 24h3v1h-3zM28 24h1v1h-1zM30 24h1v1h-1zM1 25h1v1h-1zM3 25h1v1h-1zM5 25h1v1h-1zM7 25h1v1h-1zM9 25h1v1h-1zM11 25h1v1h-1zM13 25h1v1h-1zM15 25h1v1h-1zM17 25h1v1h-1zM19 25h1v1h-1zM21 25h1v1h-1zM23 25h1v1h-1zM25 25h3v1h-3zM29 25h1v1h-1zM31 25h1v1h-1zM0 26h1v1h-1zM2 26h1v1h-1zM4 26h3v1h-3zM8 26h3v1h-3zM13 26h2v1h-2zM16 26h3v1h-3zM20 26h3v1h-3zM24 26h1v1h-1zM26 26h5v1h-5zM1 27h1v1h-1zM4 27h2v1h-2zM7 27h1v1h-1zM9 27h1v1h-1zM11 27h1v1h-1zM13 27h1v1h-1zM15 27h1v1h-1zM17 27h1v1h-1zM19 27h1v1h-1zM21 27h1v1h-1zM23 27h1v1h-1zM25 27h1v1h-1zM27 27h1v1h-1zM29 27h1v1h-1zM31 27h1v1h-1zM0 28h1v1h-1zM2 28h1v1h-1zM4 28h1v1h-1zM6 28h1v1h-1zM8 28h1v1h-1zM10 28h1v1h-1zM12 28h1v1h-1zM14 28h1v1h-1zM16 28h3v1h-3zM20 28h1v1h-1zM22 28h1v1h-1zM24 28h3v1h-3zM28 28h1v1h-1zM30 28h1v1h-1zM1 29h1v1h-1zM3 29h3v1h-3zM7 29h1v1h-1zM9 29h5v1h-5zM17 29h1v1h-1zM19 29h1v1h-1zM21 29h1v1h-1zM23 29h1v1h-1zM25 29h1v1h-1zM27 29h1v1h-1zM29 29h1v1h-1zM31 29h1v1h-1zM0 30h1v1h-1zM2 30h1v1h-1zM4 30h3v1h-3zM8 30h1v1h-1zM10 30h1v1h-1zM13 30h2v1h-2zM16 30h1v1h-1zM18 30h1v1h-1zM20 30h3v1h-3zM24 30h1v1h-1zM26 30h1v1h-1zM28 30h3v1h-3zM3 31h2v1h-2zM7 31h1v1h-1zM11 31h1v1h-1zM13 31h1v1h-1zM15 31h1v1h-1zM17 31h1v1h-1zM19 31h1v1h-1zM21 31h1v1h-1zM23 31h1v1h-1zM25 31h1v1h-1zM27 31h1v1h-1zM29 31h1v1h-1zM31 31h1v1h-1z" fill="#1c1c1c"/></pattern><pattern id="s5" width="32" height="32" patternUnits="userSpaceOnUse"><path d="M1 0h7v1h-7zM9 0h3v1h-3zM13 0h3v1h-3zM17 0h3v1h-3zM21 0h3v1h-3zM25 0h3v1h-3zM29 0h3v1h-3zM0 1h2v1h-2zM3 1h3v1h-3zM7 1h3v1h-3zM11 1h1v1h-1zM13 1h1v1h-1zM15 1h3v1h-3zM19 1h3v1h-3zM23 1h3v1h-3zM27 1h2v1h-2zM1 2h3v1h-3zM5 2h7v1h-7zM13 2h3v1h-3zM17 2h3v1h-3zM21 2h3v1h-3zM25 2h3v1h-3zM29 2h2v1h-2zM0 3h2v1h-2zM3 3h3v1h-3zM7 3h3v1h-3zM11 3h3v1h-3zM15 3h3v1h-3zM19 3h3v1h-3zM23 3h3v1h-3zM27 3h2v1h-2zM0 4h4v1h-4zM5 4h3v1h-3zM9 4h3v1h-3zM13 4h3v1h-3zM17 4h3v1h-3zM21 4h3v1h-3zM25 4h3v1h-3zM29 4h3v1h-3zM0 5h2v1h-2zM3 5h3v1h-3zM7 5h3v1h-3zM11 5h3v1h-3zM15 5h3v1h-3zM19 5h3v1h-3zM23 5h3v1h-3zM28 5h2v1h-2zM31 5h1v1h-1zM0 6h3v1h-3zM5 6h3v1h-3zM9 6h3v1h-3zM13 6h3v1h-3zM17 6h1v1h-1zM19 6h1v1h-1zM21 6h3v1h-3zM25 6h3v1h-3zM29 6h3v1h-3zM0 7h2v1h-2zM3 7h3v1h-3zM7 7h3v1h-3zM11 7h3v1h-3zM15 7h3v1h-3zM19 7h7v1h-7zM27 7h1v1h-1zM29 7h1v1h-1zM31 7h1v1h-1zM1 8h3v1h-3zM5 8h3v1h-3zM9 8h2v1h-2zM13 8h3v1h-3zM17 8h3v1h-3zM21 8h3v1h-3zM25 8h3v1h-3zM29 8h3v1h-3zM0 9h10v1h-10zM12 9h1v1h-1zM16 9h2v1h-2zM19 9h3v1h-3zM23 9h3v1h-3zM27 9h3v1h-3zM31 9h1v1h-1zM1 10h3v1h-3zM5 10h3v1h-3zM9 10h3v1h-3zM13 10h3v1h-3zM17 10h3v1h-3zM21 10h3v1h-3zM25 10h2v1h-2zM29 10h3v1h-3zM0 11h2v1h-2zM3 11h3v1h-3zM7 11h3v1h-3zM11 11h3v1h-3zM15 11h3v1h-3zM19 11h3v1h-3zM23 11h3v1h-3zM27 11h3v1h-3zM31 11h1v1h-1zM1 12h3v1h-3zM5 12h3v1h-3zM9 12h3v1h-3zM13 12h3v1h-3zM17 12h5v1h-5zM23 12h1v1h-1zM25 12h3v1h-3zM29 12h3v1h-3zM0 13h2v1h-2zM3 13h7v1h-7zM12 13h2v1h-2zM15 13h3v1h-3zM19 13h3v1h-3zM23 13h3v1h-3zM27 13h3v1h-3zM1 14h2v1h-2zM5 14h4v1h-4zM10 14h2v1h-2zM14 14h2v1h-2zM17 14h3v1h-3zM21 14h3v1h-3zM25 14h3v1h-3zM29 14h3v1h-3zM0 15h2v1h-2zM3 15h3v1h-3zM7 15h3v1h-3zM11 15h3v1h-3zM15 15h3v1h-3zM19 15h3v1h-3zM23 15h3v1h-3zM27 15h3v1h-3zM1 16h3v1h-3zM5 16h3v1h-3zM9 16h4v1h-4zM14 16h2v1h-2zM17 16h3v1h-3zM21 16h3v1h-3zM25 16h3v1h-3zM29 16h3v1h-3zM1 17h1v1h-1zM3 17h3v1h-3zM7 17h3v1h-3zM11 17h3v1h-3zM15 17h3v1h-3zM19 17h3v1h-3zM23 17h3v1h-3zM27 17h3v1h-3zM31 17h1v1h-1zM1 18h3v1h-3zM5 18h3v1h-3zM9 18h3v1h-3zM13 18h3v1h-3zM17 18h7v1h-7zM25 18h3v1h-3zM29 18h3v1h-3zM0 19h2v1h-2zM3 19h3v1h-3zM7 19h3v1h-3zM11 19h3v1h-3zM15 19h3v1h-3zM19 19h2v1h-2zM27 19h3v1h-3zM31 19h1v1h-1zM1 20h1v1h-1zM3 20h1v1h-1zM5 20h3v1h-3zM9 20h3v1h-3zM13 20h3v1h-3zM17 20h3v1h-3zM21 20h1v1h-1zM23 20h1v1h-1zM25 20h3v1h-3zM29 20h3v1h-3zM0 21h2v1h-2zM3 21h3v1h-3zM8 21h2v1h-2zM11 21h1v1h-1zM13 21h1v1h-1zM15 21h3v1h-3zM19 21h3v1h-3zM23 21h3v1h-3zM27 21h3v1h-3zM31 21h1v1h-1zM2 22h2v1h-2zM5 22h3v1h-3zM9 22h3v1h-3zM13 22h3v1h-3zM17 22h3v1h-3zM22 22h2v1h-2zM26 22h2v1h-2zM29 22h1v1h-1zM31 22h1v1h-1zM0 23h2v1h-2zM3 23h3v1h-3zM7 23h3v1h-3zM11 23h3v1h-3zM15 23h3v1h-3zM19 23h1v1h-1zM21 23h1v1h-1zM23 23h3v1h-3zM27 23h2v1h-2zM31 23h1v1h-1zM1 24h3v1h-3zM5 24h3v1h-3zM9 24h3v1h-3zM13 24h1v1h-1zM15 24h1v1h-1zM17 24h3v1h-3zM21 24h3v1h-3zM25 24h3v1h-3zM29 24h3v1h-3zM0 25h2v1h-2zM3 25h3v1h-3zM7 25h3v1h-3zM11 25h1v1h-1zM13 25h1v1h-1zM17 25h1v1h-1zM19 25h3v1h-3zM23 25h1v1h-1zM25 25h1v1h-1zM27 25h3v1h-3zM31 25h1v1h-1zM1 26h3v1h-3zM5 26h7v1h-7zM13 26h3v1h-3zM17 26h3v1h-3zM21 26h3v1h-3zM25 26h3v1h-3zM29 26h3v1h-3zM0 27h2v1h-2zM3 27h2v1h-2zM9 27h1v1h-1zM11 27h3v1h-3zM15 27h3v1h-3zM19 27h7v1h-7zM27 27h3v1h-3zM1 28h3v1h-3zM5 28h3v1h-3zM9 28h2v1h-2zM13 28h1v1h-1zM15 28h1v1h-1zM18 28h2v1h-2zM21 28h3v1h-3zM25 28h3v1h-3zM29 28h3v1h-3zM0 29h2v1h-2zM3 29h2v1h-2zM7 29h3v1h-3zM12 29h2v1h-2zM15 29h3v1h-3zM20 29h2v1h-2zM23 29h3v1h-3zM27 29h3v1h-3zM31 29h1v1h-1zM1 30h3v1h-3zM5 30h3v1h-3zM9 30h3v1h-3zM13 30h3v1h-3zM18 30h2v1h-2zM21 30h1v1h-1zM23 30h1v1h-1zM25 30h1v1h-1zM27 30h1v1h-1zM29 30h3v1h-3zM0 31h1v1h-1zM3 31h1v1h-1zM7 31h3v1h-3zM11 31h3v1h-3zM15 31h3v1h-3zM19 31h3v1h-3zM24 31h2v1h-2zM27 31h3v1h-3zM31 31h1v1h-1z" fill="#1c1c1c"/></pattern><pattern id="s6" width="32" height="32" patternUnits="userSpaceOnUse"><path d="M1 0h5v1h-5zM7 0h9v1h-9zM17 0h4v1h-4zM22 0h2v1h-2zM25 0h7v1h-7zM0 1h2v1h-2zM3 1h3v1h-3zM7 1h7v1h-7zM15 1h7v1h-7zM23 1h1v1h-1zM25 1h5v1h-5zM31 1h1v1h-1zM0 2h4v1h-4zM5 2h7v1h-7zM13 2h1v1h-1zM15 2h3v1h-3zM19 2h1v1h-1zM21 2h7v1h-7zM29 2h3v1h-3zM0 3h2v1h-2zM3 3h15v1h-15zM20 3h6v1h-6zM27 3h5v1h-5zM3 4h3v1h-3zM7 4h1v1h-1zM9 4h7v1h-7zM17 4h12v1h-12zM30 4h2v1h-2zM0 5h6v1h-6zM7 5h7v1h-7zM15 5h4v1h-4zM21 5h1v1h-1zM23 5h7v1h-7zM31 5h1v1h-1zM0 6h4v1h-4zM5 6h7v1h-7zM13 6h7v1h-7zM21 6h7v1h-7zM29 6h3v1h-3zM0 7h2v1h-2zM4 7h6v1h-6zM11 7h7v1h-7zM19 7h7v1h-7zM27 7h2v1h-2zM30 7h2v1h-2zM0 8h8v1h-8zM9 8h7v1h-7zM17 8h7v1h-7zM25 8h7v1h-7zM0 9h6v1h-6zM7 9h7v1h-7zM15 9h7v1h-7zM23 9h7v1h-7zM0 10h2v1h-2zM3 10h1v1h-1zM5 10h15v1h-15zM21 10h4v1h-4zM26 10h2v1h-2zM29 10h3v1h-3zM0 11h2v1h-2zM3 11h7v1h-7zM11 11h3v1h-3zM15 11h3v1h-3zM19 11h4v1h-4zM24 11h1v1h-1zM27 11h5v1h-5zM1 12h7v1h-7zM9 12h5v1h-5zM15 12h1v1h-1zM17 12h7v1h-7zM25 12h7v1h-7zM0 13h12v1h-12zM13 13h1v1h-1zM15 13h1v1h-1zM18 13h4v1h-4zM23 13h7v1h-7zM31 13h1v1h-1zM1 14h3v1h-3zM5 14h7v1h-7zM13 14h4v1h-4zM18 14h2v1h-2zM21 14h6v1h-6zM29 14h3v1h-3zM0 15h2v1h-2zM3 15h7v1h-7zM11 15h7v1h-7zM19 15h4v1h-4zM24 15h2v1h-2zM27 15h5v1h-5zM1 16h5v1h-5zM7 16h1v1h-1zM9 16h7v1h-7zM17 16h7v1h-7zM25 16h2v1h-2zM29 16h3v1h-3zM0 17h4v1h-4zM5 17h1v1h-1zM7 17h7v1h-7zM15 17h4v1h-4zM20 17h2v1h-2zM23 17h7v1h-7zM31 17h1v1h-1zM0 18h4v1h-4zM6 18h5v1h-5zM13 18h7v1h-7zM21 18h7v1h-7zM29 18h3v1h-3zM0 19h2v1h-2zM3 19h7v1h-7zM11 19h7v1h-7zM19 19h7v1h-7zM27 19h4v1h-4zM0 20h5v1h-5zM6 20h2v1h-2zM9 20h7v1h-7zM17 20h5v1h-5zM23 20h1v1h-1zM25 20h7v1h-7zM0 21h6v1h-6zM8 21h6v1h-6zM15 21h4v1h-4zM20 21h2v1h-2zM23 21h4v1h-4zM28 21h2v1h-2zM31 21h1v1h-1zM0 22h4v1h-4zM5 22h7v1h-7zM13 22h7v1h-7zM21 22h2v1h-2zM24 22h4v1h-4zM29 22h3v1h-3zM0 23h2v1h-2zM4 23h5v1h-5zM11 23h7v1h-7zM19 23h1v1h-1zM21 23h5v1h-5zM28 23h3v1h-3zM0 24h8v1h-8zM9 24h5v1h-5zM15 24h1v1h-1zM17 24h2v1h-2zM20 24h4v1h-4zM25 24h7v1h-7zM0 25h6v1h-6zM7 25h5v1h-5zM13 25h1v1h-1zM15 25h7v1h-7zM23 25h7v1h-7zM31 25h1v1h-1zM0 26h4v1h-4zM5 26h7v1h-7zM13 26h7v1h-7zM21 26h3v1h-3zM25 26h3v1h-3zM29 26h3v1h-3zM0 27h2v1h-2zM3 27h7v1h-7zM11 27h5v1h-5zM17 27h1v1h-1zM19 27h7v1h-7zM27 27h5v1h-5zM1 28h7v1h-7zM9 28h5v1h-5zM15 28h1v1h-1zM17 28h5v1h-5zM23 28h1v1h-1zM25 28h7v1h-7zM0 29h6v1h-6zM7 29h4v1h-4zM12 29h2v1h-2zM15 29h7v1h-7zM23 29h7v1h-7zM31 29h1v1h-1zM1 30h2v1h-2zM5 30h7v1h-7zM13 30h3v1h-3zM17 30h3v1h-3zM21 30h7v1h-7zM29 30h2v1h-2zM0 31h2v1h-2zM3 31h2v1h-2zM6 31h4v1h-4zM11 31h7v1h-7zM19 31h7v1h-7zM27 31h5v1h-5z" fill="#1c1c1c"/></pattern><pattern id="sm" width="32" height="32" patternUnits="userSpaceOnUse"><path d="M0 0h1v1h-1zM4 0h1v1h-1zM8 0h1v1h-1zM16 0h1v1h-1zM20 0h1v1h-1zM24 0h1v1h-1zM28 0h1v1h-1zM30 0h1v1h-1zM2 1h1v1h-1zM10 1h1v1h-1zM14 1h2v1h-2zM18 1h1v1h-1zM22 1h1v1h-1zM26 1h2v1h-2zM29 1h2v1h-2zM0 2h1v1h-1zM8 2h1v1h-1zM12 2h1v1h-1zM15 2h2v1h-2zM19 2h1v1h-1zM24 2h1v1h-1zM28 2h1v1h-1zM0 3h1v1h-1zM2 3h1v1h-1zM6 3h1v1h-1zM10 3h1v1h-1zM14 3h1v1h-1zM19 3h1v1h-1zM22 3h1v1h-1zM26 3h1v1h-1zM30 3h1v1h-1zM0 4h1v1h-1zM4 4h1v1h-1zM8 4h1v1h-1zM12 4h1v1h-1zM16 4h1v1h-1zM20 4h1v1h-1zM24 4h1v1h-1zM26 4h1v1h-1zM28 4h1v1h-1zM31 4h1v1h-1zM2 5h1v1h-1zM4 5h3v1h-3zM10 5h1v1h-1zM13 5h2v1h-2zM18 5h2v1h-2zM22 5h2v1h-2zM26 5h1v1h-1zM29 5h1v1h-1zM31 5h1v1h-1zM0 6h2v1h-2zM4 6h1v1h-1zM8 6h1v1h-1zM10 6h1v1h-1zM12 6h1v1h-1zM16 6h1v1h-1zM20 6h1v1h-1zM24 6h1v1h-1zM28 6h1v1h-1zM2 7h1v1h-1zM6 7h1v1h-1zM10 7h1v1h-1zM14 7h1v1h-1zM18 7h1v1h-1zM26 7h1v1h-1zM30 7h1v1h-1zM0 8h1v1h-1zM4 8h1v1h-1zM12 8h1v1h-1zM14 8h3v1h-3zM20 8h1v1h-1zM24 8h1v1h-1zM28 8h1v1h-1zM2 9h2v1h-2zM6 9h1v1h-1zM9 9h2v1h-2zM15 9h1v1h-1zM18 9h1v1h-1zM22 9h1v1h-1zM25 9h2v1h-2zM30 9h1v1h-1zM0 10h1v1h-1zM2 10h1v1h-1zM4 10h1v1h-1zM8 10h1v1h-1zM12 10h1v1h-1zM16 10h1v1h-1zM20 10h1v1h-1zM24 10h1v1h-1zM27 10h2v1h-2zM2 11h1v1h-1zM6 11h1v1h-1zM10 11h1v1h-1zM14 11h1v1h-1zM18 11h1v1h-1zM21 11h1v1h-1zM26 11h1v1h-1zM30 11h1v1h-1zM0 12h1v1h-1zM4 12h1v1h-1zM8 12h1v1h-1zM12 12h1v1h-1zM15 12h2v1h-2zM20 12h2v1h-2zM24 12h1v1h-1zM28 12h2v1h-2zM2 13h1v1h-1zM6 13h1v1h-1zM10 13h1v1h-1zM16 13h1v1h-1zM18 13h1v1h-1zM22 13h1v1h-1zM26 13h1v1h-1zM30 13h1v1h-1zM4 14h1v1h-1zM8 14h1v1h-1zM12 14h1v1h-1zM16 14h5v1h-5zM24 14h1v1h-1zM28 14h1v1h-1zM2 15h1v1h-1zM6 15h1v1h-1zM10 15h1v1h-1zM13 15h1v1h-1zM22 15h1v1h-1zM26 15h1v1h-1zM30 15h1v1h-1zM0 16h1v1h-1zM4 16h1v1h-1zM8 16h1v1h-1zM11 16h2v1h-2zM16 16h3v1h-3zM20 16h1v1h-1zM23 16h2v1h-2zM28 16h1v1h-1zM0 17h1v1h-1zM2 17h1v1h-1zM5 17h3v1h-3zM10 17h1v1h-1zM14 17h1v1h-1zM18 17h1v1h-1zM20 17h1v1h-1zM22 17h1v1h-1zM26 17h1v1h-1zM30 17h1v1h-1zM0 18h1v1h-1zM4 18h1v1h-1zM8 18h1v1h-1zM12 18h1v1h-1zM16 18h1v1h-1zM23 18h2v1h-2zM28 18h1v1h-1zM0 19h1v1h-1zM2 19h1v1h-1zM6 19h1v1h-1zM10 19h1v1h-1zM14 19h1v1h-1zM16 19h1v1h-1zM22 19h1v1h-1zM26 19h1v1h-1zM28 19h1v1h-1zM30 19h1v1h-1zM0 20h1v1h-1zM4 20h1v1h-1zM8 20h1v1h-1zM12 20h1v1h-1zM16 20h1v1h-1zM18 20h1v1h-1zM20 20h1v1h-1zM23 20h2v1h-2zM26 20h1v1h-1zM31 20h1v1h-1zM2 21h1v1h-1zM6 21h1v1h-1zM10 21h1v1h-1zM14 21h1v1h-1zM18 21h2v1h-2zM22 21h1v1h-1zM26 21h1v1h-1zM30 21h1v1h-1zM0 22h1v1h-1zM4 22h1v1h-1zM8 22h1v1h-1zM12 22h2v1h-2zM16 22h1v1h-1zM20 22h1v1h-1zM24 22h2v1h-2zM28 22h1v1h-1zM2 23h1v1h-1zM10 23h1v1h-1zM14 23h1v1h-1zM18 23h1v1h-1zM20 23h1v1h-1zM22 23h1v1h-1zM26 23h2v1h-2zM29 23h2v1h-2zM0 24h3v1h-3zM4 24h1v1h-1zM8 24h1v1h-1zM12 24h1v1h-1zM19 24h2v1h-2zM24 24h1v1h-1zM28 24h1v1h-1zM31 24h1v1h-1zM2 25h1v1h-1zM6 25h1v1h-1zM10 25h1v1h-1zM14 25h1v1h-1zM18 25h1v1h-1zM22 25h1v1h-1zM26 25h1v1h-1zM30 25h2v1h-2zM0 26h1v1h-1zM4 26h1v1h-1zM8 26h1v1h-1zM12 26h1v1h-1zM16 26h1v1h-1zM20 26h1v1h-1zM24 26h1v1h-1zM28 26h1v1h-1zM2 27h1v1h-1zM6 27h2v1h-2zM10 27h1v1h-1zM14 27h1v1h-1zM18 27h2v1h-2zM22 27h1v1h-1zM26 27h1v1h-1zM28 27h1v1h-1zM30 27h1v1h-1zM0 28h2v1h-2zM4 28h1v1h-1zM8 28h1v1h-1zM12 28h1v1h-1zM24 28h1v1h-1zM28 28h1v1h-1zM0 29h1v1h-1zM2 29h1v1h-1zM6 29h1v1h-1zM10 29h1v1h-1zM14 29h1v1h-1zM16 29h1v1h-1zM18 29h2v1h-2zM22 29h1v1h-1zM26 29h1v1h-1zM30 29h1v1h-1zM0 30h1v1h-1zM4 30h1v1h-1zM6 30h1v1h-1zM16 30h1v1h-1zM20 30h1v1h-1zM24 30h1v1h-1zM28 30h1v1h-1zM2 31h1v1h-1zM6 31h1v1h-1zM9 31h2v1h-2zM14 31h1v1h-1zM17 31h2v1h-2zM22 31h1v1h-1zM26 31h1v1h-1zM30 31h1v1h-1z" fill="#4c4c4c"/></pattern><pattern id="wd" width="32" height="32" patternUnits="userSpaceOnUse"><path d="M0 0h1v1h-1zM5 0h1v1h-1zM10 0h1v1h-1zM15 0h1v1h-1zM20 0h1v1h-1zM25 0h1v1h-1zM28 0h1v1h-1zM30 0h1v1h-1zM2 1h1v1h-1zM7 1h1v1h-1zM12 1h1v1h-1zM14 1h1v1h-1zM17 1h1v1h-1zM21 1h2v1h-2zM27 1h1v1h-1zM4 2h1v1h-1zM9 2h1v1h-1zM14 2h1v1h-1zM19 2h1v1h-1zM24 2h1v1h-1zM29 2h1v1h-1zM1 3h1v1h-1zM6 3h1v1h-1zM11 3h1v1h-1zM16 3h1v1h-1zM21 3h1v1h-1zM26 3h1v1h-1zM31 3h1v1h-1zM3 4h1v1h-1zM8 4h1v1h-1zM13 4h1v1h-1zM18 4h1v1h-1zM23 4h1v1h-1zM25 4h1v1h-1zM28 4h1v1h-1zM0 5h1v1h-1zM5 5h1v1h-1zM15 5h1v1h-1zM20 5h1v1h-1zM25 5h1v1h-1zM30 5h1v1h-1zM2 6h1v1h-1zM7 6h1v1h-1zM12 6h1v1h-1zM17 6h2v1h-2zM22 6h1v1h-1zM27 6h1v1h-1zM4 7h1v1h-1zM9 7h1v1h-1zM14 7h1v1h-1zM19 7h1v1h-1zM24 7h1v1h-1zM29 7h1v1h-1zM1 8h1v1h-1zM6 8h1v1h-1zM10 8h2v1h-2zM16 8h1v1h-1zM21 8h1v1h-1zM26 8h1v1h-1zM31 8h1v1h-1zM3 9h1v1h-1zM8 9h1v1h-1zM13 9h1v1h-1zM16 9h1v1h-1zM18 9h1v1h-1zM23 9h1v1h-1zM28 9h1v1h-1zM31 9h1v1h-1zM0 10h1v1h-1zM5 10h1v1h-1zM8 10h1v1h-1zM10 10h1v1h-1zM15 10h1v1h-1zM20 10h1v1h-1zM25 10h1v1h-1zM30 10h1v1h-1zM2 11h1v1h-1zM7 11h1v1h-1zM12 11h1v1h-1zM16 11h2v1h-2zM22 11h1v1h-1zM27 11h1v1h-1zM3 12h2v1h-2zM9 12h1v1h-1zM13 12h2v1h-2zM24 12h1v1h-1zM29 12h1v1h-1zM1 13h1v1h-1zM6 13h1v1h-1zM16 13h1v1h-1zM21 13h1v1h-1zM26 13h1v1h-1zM31 13h1v1h-1zM3 14h2v1h-2zM8 14h1v1h-1zM12 14h2v1h-2zM17 14h2v1h-2zM23 14h1v1h-1zM28 14h1v1h-1zM0 15h1v1h-1zM5 15h1v1h-1zM10 15h1v1h-1zM15 15h1v1h-1zM20 15h1v1h-1zM25 15h1v1h-1zM30 15h1v1h-1zM7 16h1v1h-1zM12 16h1v1h-1zM17 16h2v1h-2zM22 16h1v1h-1zM27 16h1v1h-1zM4 17h1v1h-1zM9 17h1v1h-1zM12 17h1v1h-1zM14 17h1v1h-1zM19 17h1v1h-1zM24 17h1v1h-1zM29 17h1v1h-1zM1 18h1v1h-1zM6 18h1v1h-1zM11 18h1v1h-1zM16 18h1v1h-1zM21 18h1v1h-1zM26 18h1v1h-1zM31 18h1v1h-1zM3 19h1v1h-1zM8 19h1v1h-1zM13 19h1v1h-1zM18 19h1v1h-1zM23 19h1v1h-1zM28 19h1v1h-1zM0 20h1v1h-1zM5 20h1v1h-1zM10 20h1v1h-1zM15 20h1v1h-1zM20 20h1v1h-1zM25 20h1v1h-1zM30 20h1v1h-1zM2 21h1v1h-1zM7 21h1v1h-1zM10 21h1v1h-1zM12 21h1v1h-1zM17 21h2v1h-2zM22 21h1v1h-1zM27 21h1v1h-1zM4 22h1v1h-1zM9 22h1v1h-1zM14 22h1v1h-1zM19 22h1v1h-1zM24 22h1v1h-1zM29 22h1v1h-1zM1 23h1v1h-1zM6 23h1v1h-1zM11 23h1v1h-1zM16 23h1v1h-1zM21 23h1v1h-1zM26 23h1v1h-1zM31 23h1v1h-1zM3 24h1v1h-1zM8 24h1v1h-1zM13 24h1v1h-1zM18 24h1v1h-1zM23 24h1v1h-1zM26 24h1v1h-1zM28 24h1v1h-1zM0 25h2v1h-2zM5 25h1v1h-1zM10 25h1v1h-1zM15 25h1v1h-1zM19 25h1v1h-1zM25 25h1v1h-1zM2 26h1v1h-1zM7 26h1v1h-1zM12 26h1v1h-1zM17 26h1v1h-1zM22 26h1v1h-1zM9 27h1v1h-1zM14 27h1v1h-1zM19 27h1v1h-1zM24 27h1v1h-1zM29 27h1v1h-1zM1 28h1v1h-1zM6 28h1v1h-1zM11 28h1v1h-1zM16 28h1v1h-1zM18 28h1v1h-1zM20 28h2v1h-2zM26 28h1v1h-1zM31 28h1v1h-1zM3 29h1v1h-1zM8 29h1v1h-1zM13 29h1v1h-1zM18 29h1v1h-1zM23 29h1v1h-1zM28 29h1v1h-1zM0 30h1v1h-1zM5 30h1v1h-1zM10 30h1v1h-1zM15 30h1v1h-1zM20 30h1v1h-1zM25 30h1v1h-1zM29 30h2v1h-2zM2 31h1v1h-1zM7 31h1v1h-1zM12 31h1v1h-1zM17 31h1v1h-1zM22 31h1v1h-1zM27 31h1v1h-1z" fill="#d0d0d0"/></pattern><pattern id="zz" width="6" height="6" patternUnits="userSpaceOnUse" patternTransform="rotate(55)"><path d="M0 2h1v1h-1zM1 1h1v1h-1zM2 0h1v1h-1zM3 1h1v1h-1zM4 2h1v1h-1zM5 3h1v1h-1zM0 3h1v1h-1z" fill="#909090"/></pattern><clipPath id="sil"><polygon points="191,163 200,158 210,153 221,149 232,145.5 250,141.5 268,139.5 290,138 310,138.2 327,139 342,140.2 370,142.5 397,145.7 425,148.8 437,150.5 448,151.5 469,154.6 486,161 502,167.8 518,175.5 535,184.2 551,193 567.8,202.2 580,210.5 590.8,218.7 601,228 610.5,238.4 616,248 620.3,258 623,268 623.8,278 622.8,294 619,306 613.8,314.5 607,326.8 600,332 594,336 590,339 590,329.6 584.5,308 574,281.7 561,271 545,260 518,255 489,253 469,248 457.4,241.7 454,237 449,230 445,225 441,220.4 438.5,214 432,209.5 437,205.5 444,203 442,200.5 435,196 440,192.5 447.5,188 446,185 432,181 434,178.5 447.5,176 447,172.5 433,172 430,171.5 427,176.5 425.4,178 423,172 418,177 416.4,173.7 413,179 408.2,184.3 403,192 400,195.8 397.2,202 390,206.5 383.5,210.7 376.6,219.3 368,226.1 362,233 359.4,236.4 354.2,239.5 351.5,228 346,214 339,198.6 333,184.9 328.4,174 318,174 305,175 300,173.5 293,170 285,167 272,163 258,160 245,158.5 232,161 222,164 210,166 196,166"/></clipPath><filter id="bl" x="0" y="0" width="100%" height="100%" filterUnits="userSpaceOnUse" primitiveUnits="userSpaceOnUse"><feGaussianBlur stdDeviation="0.45"/></filter></defs>
<rect width="723" height="640" fill="#000"/>
<g clip-path="url(#sil)"><g filter="url(#bl)">
<path fill="rgb(0,0,0)" d="M559 251h4v2h-4zM557 253h6v2h-6zM555 255h10v2h-10zM555 257h12v2h-12zM553 259h16v2h-16zM551 261h18v2h-18zM549 263h22v2h-22zM551 265h20v2h-20zM555 267h16v2h-16zM557 269h12v2h-12zM559 271h12v2h-12zM563 273h8v2h-8zM565 275h6v2h-6zM567 277h16v2h-16zM569 279h16v2h-16zM573 281h14v2h-14zM573 283h16v2h-16zM575 285h14v2h-14zM575 287h16v2h-16zM575 289h18v2h-18zM577 291h16v2h-16zM577 293h16v2h-16zM579 295h14v2h-14zM579 297h18v2h-18zM579 299h20v2h-20zM581 301h22v2h-22zM581 303h24v2h-24zM583 305h20v2h-20zM583 307h20v2h-20zM583 309h18v2h-18zM585 311h16v2h-16zM585 313h14v2h-14zM585 315h14v2h-14zM585 317h12v2h-12zM587 319h8v2h-8zM587 321h4v2h-4zM587 323h2v2h-2z"/>
<path fill="rgb(32,27,27)" d="M581 275h6v2h-6zM583 277h8v2h-8zM585 279h6v2h-6zM587 281h6v2h-6zM589 283h6v2h-6zM589 285h6v2h-6zM591 287h6v2h-6zM593 289h6v2h-6zM593 291h6v2h-6zM593 293h6v2h-6zM593 295h6v2h-6zM597 297h2v2h-2z"/>
<path fill="rgb(40,35,35)" d="M565 243h2v2h-2zM563 245h6v2h-6zM561 247h10v2h-10zM561 249h10v2h-10zM563 251h10v2h-10zM563 253h12v2h-12zM565 255h12v2h-12zM567 257h10v2h-10zM569 259h10v2h-10zM569 261h10v2h-10zM571 263h6v2h-6zM571 265h8v2h-8zM571 267h8v2h-8zM569 269h10v2h-10zM571 271h10v2h-10zM571 273h10v2h-10zM571 275h10v2h-10z"/>
<path fill="rgb(64,59,59)" d="M497 197h20v2h-20zM499 199h24v2h-24zM499 201h28v2h-28zM499 203h32v2h-32zM501 205h34v2h-34zM503 207h34v2h-34zM503 209h38v2h-38zM505 211h38v2h-38zM507 213h40v2h-40zM509 215h38v2h-38zM511 217h36v2h-36zM513 219h36v2h-36zM515 221h34v2h-34zM517 223h34v2h-34zM519 225h32v2h-32zM523 227h30v2h-30zM529 229h22v2h-22zM535 231h16v2h-16zM541 233h8v2h-8zM547 235h2v2h-2zM587 275h8v2h-8zM591 277h8v2h-8zM591 279h8v2h-8zM593 281h8v2h-8zM595 283h8v2h-8zM595 285h8v2h-8zM597 287h8v2h-8zM599 289h8v2h-8zM599 291h8v2h-8zM599 293h8v2h-8zM599 295h8v2h-8zM599 297h8v2h-8zM599 299h8v2h-8zM603 301h2v2h-2zM603 305h6v2h-6zM603 307h8v2h-8zM601 309h10v2h-10zM601 311h10v2h-10zM599 313h10v2h-10zM599 315h10v2h-10zM597 317h10v2h-10zM595 319h12v2h-12zM591 321h14v2h-14zM589 323h16v2h-16zM587 325h16v2h-16zM589 327h10v2h-10zM589 329h6v2h-6zM589 331h4v2h-4zM589 333h2v2h-2z"/>
<path fill="rgb(80,75,75)" d="M569 237h4v2h-4zM497 239h6v2h-6zM569 239h6v2h-6zM497 241h8v2h-8zM567 241h8v2h-8zM495 243h12v2h-12zM567 243h10v2h-10zM495 245h16v2h-16zM569 245h10v2h-10zM493 247h20v2h-20zM571 247h10v2h-10zM493 249h24v2h-24zM571 249h10v2h-10zM491 251h28v2h-28zM573 251h10v2h-10zM491 253h32v2h-32zM575 253h10v2h-10zM517 255h8v2h-8zM577 255h8v2h-8zM577 257h8v2h-8zM579 259h6v2h-6zM579 261h6v2h-6zM577 263h8v2h-8zM579 265h8v2h-8zM579 267h8v2h-8zM579 269h8v2h-8zM581 271h8v2h-8zM581 273h8v2h-8z"/>
<path fill="rgb(88,83,83)" d="M519 197h2v2h-2zM523 199h2v2h-2zM547 217h4v2h-4zM549 219h4v2h-4zM549 221h6v2h-6zM505 223h6v2h-6zM551 223h6v2h-6zM505 225h8v2h-8zM551 225h8v2h-8zM503 227h14v2h-14zM553 227h8v2h-8zM503 229h16v2h-16zM551 229h12v2h-12zM501 231h20v2h-20zM551 231h14v2h-14zM501 233h24v2h-24zM553 233h14v2h-14zM499 235h28v2h-28zM555 235h14v2h-14zM499 237h32v2h-32zM557 237h12v2h-12zM503 239h30v2h-30zM559 239h10v2h-10zM505 241h30v2h-30zM561 241h6v2h-6zM507 243h32v2h-32zM563 243h2v2h-2zM511 245h30v2h-30zM513 247h30v2h-30zM517 249h28v2h-28zM519 251h28v2h-28zM523 253h26v2h-26zM525 255h26v2h-26zM527 257h24v2h-24zM539 259h14v2h-14zM545 261h6v2h-6z"/>
<path fill="rgb(96,91,91)" d="M451 221h4v2h-4zM451 223h8v2h-8zM451 225h10v2h-10zM451 227h14v2h-14zM449 229h18v2h-18zM449 231h22v2h-22zM451 233h22v2h-22zM451 235h24v2h-24zM453 237h26v2h-26zM455 239h26v2h-26zM455 241h28v2h-28zM459 243h28v2h-28zM463 245h26v2h-26zM467 247h26v2h-26zM471 249h22v2h-22zM479 251h12v2h-12zM487 253h4v2h-4zM595 275h8v2h-8zM599 277h6v2h-6zM599 279h8v2h-8zM601 281h6v2h-6zM603 283h6v2h-6zM603 285h8v2h-8zM605 287h6v2h-6zM607 289h6v2h-6zM607 291h6v2h-6zM607 293h6v2h-6zM607 295h6v2h-6zM607 297h6v2h-6zM607 299h6v2h-6zM605 301h8v2h-8zM605 303h8v2h-8zM609 305h2v2h-2z"/>
<path fill="rgb(104,99,99)" d="M457 203h4v2h-4zM457 205h6v2h-6zM457 207h8v2h-8zM455 209h14v2h-14zM455 211h18v2h-18zM455 213h20v2h-20zM453 215h26v2h-26zM453 217h28v2h-28zM453 219h30v2h-30zM455 221h32v2h-32zM459 223h30v2h-30zM461 225h30v2h-30zM465 227h30v2h-30zM467 229h32v2h-32zM471 231h30v2h-30zM473 233h28v2h-28zM475 235h24v2h-24zM479 237h20v2h-20zM481 239h16v2h-16zM483 241h14v2h-14zM487 243h8v2h-8zM489 245h6v2h-6z"/>
<path fill="rgb(112,107,107)" d="M341 207h2v2h-2zM343 209h2v2h-2zM343 211h6v2h-6zM345 213h6v2h-6zM345 215h8v2h-8zM347 217h8v2h-8zM509 217h2v2h-2zM347 219h12v2h-12zM507 219h6v2h-6zM347 221h14v2h-14zM507 221h8v2h-8zM349 223h14v2h-14zM511 223h6v2h-6zM349 225h16v2h-16zM513 225h6v2h-6zM351 227h18v2h-18zM517 227h6v2h-6zM351 229h16v2h-16zM519 229h10v2h-10zM351 231h14v2h-14zM521 231h14v2h-14zM351 233h12v2h-12zM525 233h16v2h-16zM549 233h4v2h-4zM353 235h8v2h-8zM527 235h20v2h-20zM549 235h6v2h-6zM353 237h6v2h-6zM531 237h26v2h-26zM353 239h4v2h-4zM533 239h26v2h-26zM535 241h26v2h-26zM539 243h24v2h-24zM541 245h22v2h-22zM543 247h18v2h-18zM545 249h16v2h-16zM547 251h12v2h-12zM549 253h8v2h-8zM551 255h4v2h-4zM551 257h4v2h-4z"/>
<path fill="rgb(120,115,115)" d="M275 137h54v2h-54zM253 139h100v2h-100zM243 141h132v2h-132zM233 143h160v2h-160zM227 145h182v2h-182zM219 147h208v2h-208zM215 149h228v2h-228zM215 151h108v2h-108zM437 151h22v2h-22zM215 153h60v2h-60zM441 153h30v2h-30zM215 155h12v2h-12zM461 155h14v2h-14zM471 157h2v2h-2zM465 185h2v2h-2zM463 187h6v2h-6zM333 189h2v2h-2zM463 189h8v2h-8zM335 191h2v2h-2zM461 191h14v2h-14zM335 193h4v2h-4zM461 193h16v2h-16zM337 195h4v2h-4zM461 195h20v2h-20zM337 197h8v2h-8zM459 197h24v2h-24zM339 199h8v2h-8zM459 199h28v2h-28zM339 201h10v2h-10zM459 201h30v2h-30zM341 203h10v2h-10zM461 203h30v2h-30zM341 205h14v2h-14zM463 205h32v2h-32zM343 207h14v2h-14zM465 207h32v2h-32zM345 209h14v2h-14zM469 209h32v2h-32zM349 211h12v2h-12zM473 211h30v2h-30zM351 213h14v2h-14zM475 213h32v2h-32zM353 215h14v2h-14zM479 215h30v2h-30zM355 217h14v2h-14zM481 217h28v2h-28zM359 219h12v2h-12zM483 219h24v2h-24zM361 221h14v2h-14zM487 221h20v2h-20zM363 223h10v2h-10zM489 223h16v2h-16zM365 225h6v2h-6zM491 225h14v2h-14zM495 227h8v2h-8zM499 229h4v2h-4z"/>
<path fill="rgb(128,123,123)" d="M475 155h2v2h-2zM473 157h8v2h-8zM477 159h10v2h-10zM481 161h10v2h-10zM485 163h12v2h-12zM491 165h10v2h-10zM437 167h14v2h-14zM495 167h10v2h-10zM437 169h16v2h-16zM499 169h10v2h-10zM437 171h16v2h-16zM505 171h8v2h-8zM447 173h6v2h-6zM509 173h8v2h-8zM327 175h4v2h-4zM441 175h12v2h-12zM513 175h4v2h-4zM329 177h4v2h-4zM437 177h16v2h-16zM329 179h6v2h-6zM437 179h14v2h-14zM331 181h6v2h-6zM437 181h14v2h-14zM331 183h10v2h-10zM437 183h16v2h-16zM333 185h10v2h-10zM445 185h8v2h-8zM333 187h12v2h-12zM445 187h8v2h-8zM335 189h12v2h-12zM441 189h12v2h-12zM337 191h14v2h-14zM439 191h12v2h-12zM339 193h14v2h-14zM437 193h12v2h-12zM341 195h14v2h-14zM437 195h8v2h-8zM345 197h12v2h-12zM437 197h10v2h-10zM347 199h14v2h-14zM439 199h10v2h-10zM349 201h14v2h-14zM441 201h8v2h-8zM351 203h14v2h-14zM437 203h12v2h-12zM355 205h12v2h-12zM437 205h12v2h-12zM357 207h14v2h-14zM437 207h10v2h-10zM359 209h14v2h-14zM437 209h6v2h-6zM361 211h14v2h-14zM437 211h8v2h-8zM365 213h12v2h-12zM437 213h8v2h-8zM367 215h14v2h-14zM437 215h16v2h-16zM369 217h10v2h-10zM439 217h14v2h-14zM371 219h6v2h-6zM439 219h14v2h-14zM441 221h10v2h-10zM443 223h8v2h-8zM443 225h8v2h-8zM445 227h6v2h-6zM447 229h2v2h-2zM611 309h4v2h-4zM611 311h6v2h-6zM609 313h6v2h-6zM609 315h6v2h-6zM607 317h6v2h-6zM607 319h6v2h-6zM605 321h6v2h-6zM605 323h6v2h-6zM603 325h6v2h-6zM599 327h8v2h-8zM595 329h10v2h-10zM593 331h10v2h-10zM591 333h8v2h-8zM589 335h8v2h-8zM589 337h4v2h-4zM589 339h2v2h-2z"/>
<path fill="rgb(136,131,131)" d="M209 151h6v2h-6zM323 151h12v2h-12zM361 151h76v2h-76zM205 153h10v2h-10zM275 153h60v2h-60zM365 153h76v2h-76zM201 155h14v2h-14zM227 155h108v2h-108zM369 155h92v2h-92zM197 157h138v2h-138zM373 157h98v2h-98zM193 159h50v2h-50zM249 159h86v2h-86zM375 159h98v2h-98zM189 161h44v2h-44zM261 161h74v2h-74zM379 161h94v2h-94zM189 163h38v2h-38zM271 163h66v2h-66zM381 163h90v2h-90zM193 165h24v2h-24zM277 165h60v2h-60zM383 165h88v2h-88zM283 167h56v2h-56zM385 167h52v2h-52zM451 167h20v2h-20zM289 169h52v2h-52zM387 169h50v2h-50zM453 169h16v2h-16zM293 171h50v2h-50zM389 171h48v2h-48zM453 171h18v2h-18zM297 173h48v2h-48zM391 173h40v2h-40zM453 173h20v2h-20zM303 175h4v2h-4zM331 175h16v2h-16zM391 175h30v2h-30zM423 175h6v2h-6zM453 175h22v2h-22zM333 177h16v2h-16zM393 177h22v2h-22zM417 177h2v2h-2zM423 177h4v2h-4zM433 177h4v2h-4zM453 177h24v2h-24zM335 179h18v2h-18zM393 179h22v2h-22zM431 179h6v2h-6zM451 179h30v2h-30zM337 181h18v2h-18zM393 181h20v2h-20zM431 181h6v2h-6zM451 181h32v2h-32zM341 183h18v2h-18zM393 183h18v2h-18zM453 183h34v2h-34zM343 185h20v2h-20zM393 185h16v2h-16zM453 185h12v2h-12zM467 185h24v2h-24zM345 187h22v2h-22zM393 187h14v2h-14zM453 187h10v2h-10zM469 187h24v2h-24zM347 189h26v2h-26zM391 189h16v2h-16zM453 189h10v2h-10zM471 189h26v2h-26zM351 191h54v2h-54zM451 191h10v2h-10zM475 191h24v2h-24zM353 193h50v2h-50zM435 193h2v2h-2zM449 193h12v2h-12zM477 193h24v2h-24zM355 195h46v2h-46zM433 195h4v2h-4zM445 195h16v2h-16zM481 195h24v2h-24zM357 197h44v2h-44zM435 197h2v2h-2zM447 197h12v2h-12zM483 197h14v2h-14zM361 199h38v2h-38zM449 199h10v2h-10zM487 199h12v2h-12zM363 201h36v2h-36zM449 201h10v2h-10zM489 201h10v2h-10zM365 203h32v2h-32zM449 203h8v2h-8zM491 203h8v2h-8zM367 205h26v2h-26zM435 205h2v2h-2zM449 205h8v2h-8zM495 205h6v2h-6zM371 207h20v2h-20zM431 207h6v2h-6zM447 207h10v2h-10zM497 207h6v2h-6zM373 209h14v2h-14zM431 209h6v2h-6zM443 209h12v2h-12zM501 209h2v2h-2zM375 211h10v2h-10zM433 211h4v2h-4zM445 211h10v2h-10zM503 211h2v2h-2zM377 213h6v2h-6zM445 213h10v2h-10zM613 301h6v2h-6zM613 303h8v2h-8zM611 305h10v2h-10zM611 307h8v2h-8zM615 309h4v2h-4z"/>
<path fill="rgb(144,139,139)" d="M335 151h6v2h-6zM355 151h6v2h-6zM335 153h4v2h-4zM361 153h4v2h-4zM335 155h4v2h-4zM365 155h4v2h-4zM335 157h2v2h-2zM369 157h4v2h-4zM335 159h4v2h-4zM373 159h2v2h-2zM473 159h4v2h-4zM335 161h4v2h-4zM375 161h4v2h-4zM473 161h4v2h-4zM337 163h2v2h-2zM379 163h2v2h-2zM471 163h6v2h-6zM337 165h4v2h-4zM381 165h2v2h-2zM471 165h6v2h-6zM339 167h4v2h-4zM383 167h2v2h-2zM471 167h4v2h-4zM341 169h2v2h-2zM385 169h2v2h-2zM469 169h6v2h-6zM343 171h2v2h-2zM385 171h4v2h-4zM471 171h2v2h-2zM345 173h2v2h-2zM387 173h4v2h-4zM347 175h2v2h-2zM389 175h2v2h-2zM349 177h4v2h-4zM389 177h4v2h-4zM353 179h2v2h-2zM389 179h4v2h-4zM355 181h4v2h-4zM391 181h2v2h-2zM359 183h4v2h-4zM389 183h4v2h-4zM363 185h4v2h-4zM389 185h4v2h-4zM367 187h6v2h-6zM387 187h6v2h-6zM373 189h18v2h-18zM523 189h2v2h-2zM523 191h4v2h-4zM521 193h8v2h-8zM521 195h12v2h-12zM521 197h14v2h-14zM525 199h14v2h-14zM527 201h14v2h-14zM531 203h14v2h-14zM535 205h12v2h-12zM537 207h12v2h-12zM541 209h12v2h-12zM543 211h12v2h-12zM547 213h12v2h-12zM547 215h14v2h-14zM551 217h12v2h-12zM553 219h12v2h-12zM555 221h12v2h-12zM557 223h12v2h-12zM559 225h12v2h-12zM561 227h12v2h-12zM563 229h12v2h-12zM565 231h10v2h-10zM567 233h6v2h-6zM569 235h2v2h-2zM613 291h6v2h-6zM613 293h10v2h-10zM613 295h10v2h-10zM613 297h10v2h-10zM613 299h10v2h-10zM619 301h2v2h-2z"/>
<path fill="rgb(152,147,147)" d="M341 151h14v2h-14zM339 153h22v2h-22zM339 155h10v2h-10zM355 155h10v2h-10zM337 157h8v2h-8zM361 157h8v2h-8zM339 159h6v2h-6zM367 159h6v2h-6zM339 161h6v2h-6zM369 161h6v2h-6zM477 161h4v2h-4zM339 163h6v2h-6zM373 163h6v2h-6zM477 163h6v2h-6zM341 165h4v2h-4zM375 165h6v2h-6zM477 165h4v2h-4zM343 167h4v2h-4zM377 167h6v2h-6zM475 167h6v2h-6zM343 169h6v2h-6zM379 169h6v2h-6zM475 169h4v2h-4zM345 171h6v2h-6zM381 171h4v2h-4zM473 171h6v2h-6zM347 173h6v2h-6zM383 173h4v2h-4zM473 173h4v2h-4zM349 175h6v2h-6zM383 175h6v2h-6zM475 175h2v2h-2zM353 177h6v2h-6zM383 177h6v2h-6zM355 179h6v2h-6zM383 179h6v2h-6zM359 181h8v2h-8zM383 181h8v2h-8zM363 183h10v2h-10zM379 183h10v2h-10zM367 185h22v2h-22zM373 187h14v2h-14zM575 231h2v2h-2zM573 233h4v2h-4zM571 235h8v2h-8zM573 237h8v2h-8zM575 239h8v2h-8zM575 241h10v2h-10zM577 243h8v2h-8zM579 245h8v2h-8zM581 247h8v2h-8zM581 249h8v2h-8zM583 251h8v2h-8zM585 253h6v2h-6zM585 255h6v2h-6zM585 257h6v2h-6zM585 259h6v2h-6zM585 261h8v2h-8zM585 263h8v2h-8zM587 265h8v2h-8zM587 267h8v2h-8zM587 269h8v2h-8zM589 271h6v2h-6zM589 273h10v2h-10zM613 289h12v2h-12zM619 291h4v2h-4z"/>
<path fill="rgb(160,155,155)" d="M349 155h6v2h-6zM345 157h16v2h-16zM345 159h22v2h-22zM345 161h24v2h-24zM345 163h8v2h-8zM365 163h8v2h-8zM483 163h2v2h-2zM345 165h8v2h-8zM367 165h8v2h-8zM481 165h6v2h-6zM347 167h8v2h-8zM371 167h6v2h-6zM481 167h6v2h-6zM349 169h6v2h-6zM373 169h6v2h-6zM479 169h6v2h-6zM351 171h6v2h-6zM373 171h8v2h-8zM479 171h6v2h-6zM353 173h8v2h-8zM375 173h8v2h-8zM477 173h6v2h-6zM355 175h8v2h-8zM375 175h8v2h-8zM477 175h6v2h-6zM359 177h24v2h-24zM477 177h4v2h-4zM361 179h22v2h-22zM367 181h16v2h-16zM373 183h6v2h-6zM611 287h14v2h-14z"/>
<path fill="rgb(168,163,163)" d="M353 163h12v2h-12zM353 165h14v2h-14zM487 165h4v2h-4zM355 167h16v2h-16zM487 167h6v2h-6zM355 169h8v2h-8zM365 169h8v2h-8zM485 169h10v2h-10zM357 171h16v2h-16zM485 171h12v2h-12zM361 173h14v2h-14zM483 173h18v2h-18zM363 175h12v2h-12zM483 175h20v2h-20zM481 177h26v2h-26zM481 179h28v2h-28zM483 181h28v2h-28zM487 183h28v2h-28zM491 185h26v2h-26zM493 187h28v2h-28zM497 189h26v2h-26zM499 191h24v2h-24zM501 193h20v2h-20zM505 195h16v2h-16zM517 197h2v2h-2zM609 283h16v2h-16zM611 285h14v2h-14z"/>
<path fill="rgb(176,171,171)" d="M493 167h2v2h-2zM363 169h2v2h-2zM495 169h2v2h-2zM607 281h18v2h-18z"/>
<path fill="rgb(184,179,179)" d="M497 169h2v2h-2zM497 171h6v2h-6zM501 173h2v2h-2zM607 279h18v2h-18z"/>
<path fill="rgb(192,187,187)" d="M503 171h2v2h-2zM503 173h6v2h-6zM503 175h4v2h-4zM623 275h2v2h-2zM605 277h20v2h-20z"/>
<path fill="rgb(200,195,195)" d="M507 175h6v2h-6zM507 177h6v2h-6zM509 179h4v2h-4zM621 273h4v2h-4zM603 275h20v2h-20z"/>
<path fill="rgb(208,203,203)" d="M513 177h4v2h-4zM513 179h2v2h-2zM511 181h4v2h-4zM605 273h16v2h-16z"/>
<path fill="rgb(216,211,211)" d="M613 271h12v2h-12zM599 273h6v2h-6z"/>
<path fill="rgb(224,219,219)" d="M517 175h4v2h-4zM517 177h8v2h-8zM515 179h14v2h-14zM515 181h18v2h-18zM515 183h22v2h-22zM517 185h24v2h-24zM521 187h24v2h-24zM525 189h24v2h-24zM527 191h26v2h-26zM529 193h26v2h-26zM533 195h26v2h-26zM535 197h28v2h-28zM539 199h28v2h-28zM541 201h28v2h-28zM545 203h28v2h-28zM547 205h28v2h-28zM549 207h30v2h-30zM553 209h28v2h-28zM555 211h30v2h-30zM559 213h28v2h-28zM561 215h28v2h-28zM563 217h30v2h-30zM565 219h30v2h-30zM567 221h30v2h-30zM569 223h30v2h-30zM571 225h30v2h-30zM573 227h30v2h-30zM575 229h30v2h-30zM577 231h30v2h-30zM577 233h32v2h-32zM579 235h32v2h-32zM581 237h30v2h-30zM583 239h30v2h-30zM585 241h30v2h-30zM585 243h30v2h-30zM587 245h30v2h-30zM589 247h28v2h-28zM589 249h30v2h-30zM591 251h28v2h-28zM591 253h30v2h-30zM591 255h30v2h-30zM591 257h30v2h-30zM591 259h32v2h-32zM593 261h30v2h-30zM593 263h30v2h-30zM595 265h28v2h-28zM595 267h30v2h-30zM595 269h30v2h-30zM595 271h18v2h-18z"/>
<path fill="url(#wd)" d="M305 137h20v2h-20zM305 139h20v2h-20zM305 141h20v2h-20zM305 143h20v2h-20zM305 145h20v2h-20zM347 157h12v2h-12zM347 159h18v2h-18zM465 159h12v2h-12zM345 161h24v2h-24zM465 161h16v2h-16zM347 163h24v2h-24zM465 163h20v2h-20zM347 165h26v2h-26zM465 165h26v2h-26zM349 167h28v2h-28zM463 167h32v2h-32zM351 169h26v2h-26zM463 169h36v2h-36zM351 171h28v2h-28zM463 171h6v2h-6zM471 171h34v2h-34zM355 173h26v2h-26zM463 173h6v2h-6zM473 173h36v2h-36zM357 175h24v2h-24zM463 175h4v2h-4zM475 175h38v2h-38zM359 177h24v2h-24zM477 177h40v2h-40zM363 179h18v2h-18zM481 179h34v2h-34zM369 181h12v2h-12zM483 181h32v2h-32zM487 183h28v2h-28zM491 185h26v2h-26zM493 187h28v2h-28zM497 189h26v2h-26zM499 191h24v2h-24zM501 193h20v2h-20zM505 195h16v2h-16zM517 197h2v2h-2z"/>
<path fill="url(#zz)" d="M565 243h2v2h-2zM563 245h6v2h-6zM561 247h10v2h-10zM561 249h10v2h-10zM559 251h14v2h-14zM557 253h18v2h-18zM555 255h22v2h-22zM555 257h22v2h-22zM553 259h26v2h-26zM551 261h28v2h-28zM549 263h28v2h-28zM551 265h28v2h-28zM555 267h24v2h-24zM557 269h22v2h-22zM559 271h22v2h-22zM563 273h18v2h-18zM565 275h30v2h-30zM567 277h32v2h-32zM569 279h30v2h-30zM573 281h28v2h-28zM573 283h30v2h-30zM575 285h28v2h-28zM575 287h30v2h-30zM575 289h32v2h-32zM577 291h30v2h-30zM577 293h30v2h-30zM579 295h28v2h-28zM579 297h28v2h-28zM579 299h28v2h-28zM581 301h24v2h-24zM581 303h24v2h-24zM583 305h26v2h-26zM583 307h28v2h-28zM583 309h28v2h-28zM585 311h26v2h-26zM585 313h24v2h-24zM585 315h24v2h-24zM585 317h22v2h-22zM587 319h20v2h-20zM587 321h18v2h-18zM587 323h18v2h-18zM587 325h16v2h-16zM589 327h10v2h-10zM589 329h6v2h-6zM589 331h4v2h-4zM589 333h2v2h-2z"/>
<path fill="url(#sm)" d="M327 151h110v2h-110zM327 153h100v2h-100zM433 153h8v2h-8zM329 155h86v2h-86zM437 155h24v2h-24zM331 157h78v2h-78zM437 157h34v2h-34zM333 159h72v2h-72zM437 159h36v2h-36zM333 161h70v2h-70zM437 161h36v2h-36zM333 163h68v2h-68zM437 163h34v2h-34zM333 165h68v2h-68zM437 165h34v2h-34zM333 167h66v2h-66zM451 167h20v2h-20zM333 169h64v2h-64zM453 169h16v2h-16zM333 171h62v2h-62zM453 171h16v2h-16zM333 173h60v2h-60zM453 173h16v2h-16zM335 175h58v2h-58zM453 175h14v2h-14zM337 177h54v2h-54zM453 177h14v2h-14zM339 179h50v2h-50zM451 179h16v2h-16zM343 181h46v2h-46zM451 181h14v2h-14zM345 183h42v2h-42zM453 183h12v2h-12zM347 185h38v2h-38zM453 185h12v2h-12zM349 187h36v2h-36zM453 187h10v2h-10zM353 189h30v2h-30zM453 189h10v2h-10zM355 191h24v2h-24zM451 191h10v2h-10zM357 193h20v2h-20zM435 193h2v2h-2zM449 193h12v2h-12zM361 195h12v2h-12zM433 195h4v2h-4zM445 195h16v2h-16zM363 197h8v2h-8zM435 197h2v2h-2zM447 197h12v2h-12zM365 199h4v2h-4zM449 199h10v2h-10zM449 201h10v2h-10zM449 203h8v2h-8zM435 205h2v2h-2zM449 205h8v2h-8zM431 207h6v2h-6zM447 207h10v2h-10zM431 209h6v2h-6zM443 209h12v2h-12zM433 211h4v2h-4zM445 211h10v2h-10zM445 213h10v2h-10zM613 271h12v2h-12zM599 273h26v2h-26zM603 275h22v2h-22zM605 277h20v2h-20zM607 279h18v2h-18zM607 281h18v2h-18zM609 283h16v2h-16zM611 285h14v2h-14zM611 287h14v2h-14zM613 289h12v2h-12zM613 291h10v2h-10z"/>
<path fill="url(#s0)" d="M275 137h52v2h-52zM253 139h74v2h-74zM243 141h84v2h-84zM233 143h94v2h-94zM227 145h100v2h-100zM219 147h108v2h-108zM215 149h112v2h-112zM215 151h108v2h-108zM215 153h60v2h-60zM427 153h6v2h-6zM215 155h12v2h-12zM415 155h22v2h-22zM475 155h2v2h-2zM409 157h28v2h-28zM473 157h4v2h-4zM405 159h14v2h-14zM435 159h2v2h-2zM477 159h2v2h-2zM403 161h8v2h-8zM481 161h2v2h-2zM401 163h6v2h-6zM401 165h4v2h-4zM399 167h6v2h-6zM397 169h6v2h-6zM395 171h6v2h-6zM469 171h2v2h-2zM393 173h8v2h-8zM469 173h4v2h-4zM393 175h6v2h-6zM467 175h8v2h-8zM335 177h2v2h-2zM391 177h6v2h-6zM467 177h10v2h-10zM337 179h2v2h-2zM389 179h6v2h-6zM467 179h14v2h-14zM337 181h6v2h-6zM389 181h6v2h-6zM465 181h18v2h-18zM339 183h6v2h-6zM387 183h6v2h-6zM465 183h22v2h-22zM339 185h8v2h-8zM385 185h6v2h-6zM467 185h24v2h-24zM339 187h10v2h-10zM385 187h4v2h-4zM469 187h24v2h-24zM343 189h10v2h-10zM383 189h6v2h-6zM471 189h26v2h-26zM523 189h2v2h-2zM345 191h10v2h-10zM379 191h8v2h-8zM475 191h24v2h-24zM523 191h4v2h-4zM347 193h10v2h-10zM377 193h8v2h-8zM477 193h24v2h-24zM521 193h8v2h-8zM349 195h12v2h-12zM373 195h10v2h-10zM481 195h24v2h-24zM521 195h12v2h-12zM353 197h10v2h-10zM371 197h8v2h-8zM483 197h14v2h-14zM521 197h14v2h-14zM355 199h10v2h-10zM369 199h8v2h-8zM487 199h12v2h-12zM525 199h14v2h-14zM357 201h16v2h-16zM489 201h10v2h-10zM527 201h14v2h-14zM359 203h14v2h-14zM491 203h8v2h-8zM531 203h14v2h-14zM363 205h8v2h-8zM495 205h6v2h-6zM535 205h12v2h-12zM365 207h4v2h-4zM497 207h6v2h-6zM537 207h12v2h-12zM501 209h2v2h-2zM541 209h12v2h-12zM503 211h2v2h-2zM543 211h12v2h-12zM547 213h12v2h-12zM547 215h14v2h-14zM551 217h12v2h-12zM553 219h12v2h-12zM555 221h12v2h-12zM557 223h12v2h-12zM559 225h12v2h-12zM561 227h12v2h-12zM563 229h12v2h-12zM565 231h12v2h-12zM567 233h10v2h-10zM569 235h10v2h-10zM573 237h8v2h-8zM575 239h8v2h-8zM575 241h10v2h-10zM577 243h8v2h-8zM579 245h8v2h-8zM581 247h8v2h-8zM581 249h8v2h-8zM583 251h8v2h-8zM585 253h6v2h-6zM585 255h6v2h-6zM585 257h6v2h-6zM585 259h6v2h-6zM585 261h8v2h-8zM585 263h8v2h-8zM587 265h8v2h-8zM587 267h8v2h-8zM587 269h8v2h-8zM589 271h6v2h-6zM589 273h10v2h-10zM595 275h8v2h-8zM599 277h6v2h-6zM599 279h8v2h-8zM601 281h6v2h-6zM603 283h6v2h-6zM603 285h8v2h-8zM605 287h6v2h-6zM607 289h6v2h-6zM607 291h6v2h-6zM607 293h16v2h-16zM607 295h16v2h-16zM607 297h16v2h-16zM607 299h16v2h-16zM605 301h16v2h-16zM605 303h16v2h-16zM609 305h12v2h-12zM611 307h8v2h-8zM615 309h4v2h-4z"/>
<path fill="url(#s1)" d="M323 151h4v2h-4zM317 153h10v2h-10zM317 155h10v2h-10zM317 157h10v2h-10zM419 159h16v2h-16zM411 161h26v2h-26zM407 163h20v2h-20zM433 163h4v2h-4zM405 165h10v2h-10zM435 165h2v2h-2zM405 167h6v2h-6zM403 169h6v2h-6zM401 171h6v2h-6zM401 173h6v2h-6zM399 175h6v2h-6zM397 177h6v2h-6zM435 177h2v2h-2zM395 179h6v2h-6zM435 179h2v2h-2zM395 181h6v2h-6zM433 181h4v2h-4zM393 183h6v2h-6zM391 185h6v2h-6zM465 185h2v2h-2zM389 187h6v2h-6zM463 187h6v2h-6zM341 189h2v2h-2zM389 189h6v2h-6zM463 189h8v2h-8zM341 191h4v2h-4zM387 191h6v2h-6zM461 191h14v2h-14zM343 193h4v2h-4zM385 193h8v2h-8zM461 193h16v2h-16zM343 195h6v2h-6zM383 195h8v2h-8zM461 195h20v2h-20zM345 197h8v2h-8zM379 197h10v2h-10zM459 197h24v2h-24zM519 197h2v2h-2zM345 199h10v2h-10zM377 199h8v2h-8zM459 199h28v2h-28zM523 199h2v2h-2zM347 201h10v2h-10zM373 201h10v2h-10zM459 201h30v2h-30zM349 203h10v2h-10zM373 203h6v2h-6zM461 203h30v2h-30zM351 205h12v2h-12zM371 205h6v2h-6zM463 205h32v2h-32zM353 207h12v2h-12zM369 207h6v2h-6zM465 207h32v2h-32zM357 209h16v2h-16zM469 209h32v2h-32zM359 211h14v2h-14zM473 211h30v2h-30zM361 213h10v2h-10zM475 213h32v2h-32zM363 215h4v2h-4zM445 215h8v2h-8zM479 215h30v2h-30zM447 217h6v2h-6zM481 217h30v2h-30zM547 217h4v2h-4zM449 219h4v2h-4zM483 219h30v2h-30zM549 219h4v2h-4zM487 221h28v2h-28zM549 221h6v2h-6zM489 223h16v2h-16zM511 223h6v2h-6zM551 223h6v2h-6zM491 225h14v2h-14zM513 225h6v2h-6zM551 225h8v2h-8zM495 227h8v2h-8zM517 227h6v2h-6zM553 227h8v2h-8zM499 229h4v2h-4zM519 229h10v2h-10zM551 229h12v2h-12zM521 231h14v2h-14zM551 231h14v2h-14zM525 233h16v2h-16zM549 233h18v2h-18zM527 235h20v2h-20zM549 235h20v2h-20zM531 237h42v2h-42zM533 239h42v2h-42zM535 241h40v2h-40zM539 243h26v2h-26zM567 243h10v2h-10zM541 245h22v2h-22zM569 245h10v2h-10zM543 247h18v2h-18zM571 247h10v2h-10zM545 249h16v2h-16zM571 249h10v2h-10zM547 251h12v2h-12zM573 251h10v2h-10zM549 253h8v2h-8zM575 253h10v2h-10zM551 255h4v2h-4zM577 255h8v2h-8zM551 257h4v2h-4zM577 257h8v2h-8zM579 259h6v2h-6zM579 261h6v2h-6zM577 263h8v2h-8zM579 265h8v2h-8zM579 267h8v2h-8zM579 269h8v2h-8zM581 271h8v2h-8zM581 273h8v2h-8zM587 275h8v2h-8zM591 277h8v2h-8zM591 279h8v2h-8zM593 281h8v2h-8zM595 283h8v2h-8zM595 285h8v2h-8zM597 287h8v2h-8zM599 289h8v2h-8zM599 291h8v2h-8zM599 293h8v2h-8zM599 295h8v2h-8zM599 297h8v2h-8zM599 299h8v2h-8zM603 301h2v2h-2zM603 305h6v2h-6zM603 307h8v2h-8zM601 309h14v2h-14zM601 311h16v2h-16zM599 313h16v2h-16zM599 315h16v2h-16zM597 317h16v2h-16zM595 319h18v2h-18zM591 321h20v2h-20zM589 323h22v2h-22zM587 325h22v2h-22zM589 327h18v2h-18zM589 329h16v2h-16zM589 331h14v2h-14zM589 333h10v2h-10zM589 335h8v2h-8zM589 337h4v2h-4zM589 339h2v2h-2z"/>
<path fill="url(#s2)" d="M289 153h28v2h-28zM289 155h28v2h-28zM289 157h28v2h-28zM289 159h10v2h-10zM315 159h12v2h-12zM315 161h12v2h-12zM315 163h12v2h-12zM427 163h6v2h-6zM315 165h12v2h-12zM415 165h20v2h-20zM315 167h12v2h-12zM411 167h26v2h-26zM315 169h12v2h-12zM409 169h28v2h-28zM315 171h12v2h-12zM407 171h30v2h-30zM315 173h12v2h-12zM407 173h24v2h-24zM405 175h16v2h-16zM423 175h6v2h-6zM403 177h12v2h-12zM417 177h2v2h-2zM423 177h4v2h-4zM433 177h2v2h-2zM401 179h14v2h-14zM431 179h4v2h-4zM401 181h12v2h-12zM431 181h2v2h-2zM399 183h12v2h-12zM397 185h12v2h-12zM395 187h12v2h-12zM395 189h12v2h-12zM393 191h12v2h-12zM393 193h10v2h-10zM391 195h10v2h-10zM389 197h12v2h-12zM385 199h14v2h-14zM383 201h16v2h-16zM347 203h2v2h-2zM379 203h18v2h-18zM457 203h4v2h-4zM347 205h4v2h-4zM377 205h16v2h-16zM457 205h6v2h-6zM349 207h4v2h-4zM375 207h16v2h-16zM457 207h8v2h-8zM349 209h8v2h-8zM373 209h14v2h-14zM455 209h14v2h-14zM351 211h8v2h-8zM373 211h12v2h-12zM455 211h18v2h-18zM351 213h10v2h-10zM371 213h12v2h-12zM455 213h20v2h-20zM353 215h10v2h-10zM367 215h14v2h-14zM453 215h26v2h-26zM355 217h24v2h-24zM453 217h28v2h-28zM359 219h18v2h-18zM453 219h30v2h-30zM361 221h14v2h-14zM455 221h32v2h-32zM363 223h10v2h-10zM459 223h30v2h-30zM365 225h6v2h-6zM461 225h30v2h-30zM465 227h30v2h-30zM467 229h32v2h-32zM471 231h30v2h-30zM473 233h28v2h-28zM475 235h24v2h-24zM479 237h20v2h-20zM481 239h16v2h-16zM483 241h14v2h-14zM487 243h8v2h-8zM489 245h6v2h-6z"/>
<path fill="url(#s3)" d="M275 153h14v2h-14zM265 155h24v2h-24zM327 155h2v2h-2zM265 157h24v2h-24zM327 157h4v2h-4zM265 159h24v2h-24zM299 159h16v2h-16zM327 159h6v2h-6zM291 161h24v2h-24zM327 161h6v2h-6zM291 163h24v2h-24zM327 163h6v2h-6zM291 165h24v2h-24zM327 165h6v2h-6zM291 167h24v2h-24zM327 167h6v2h-6zM437 167h14v2h-14zM291 169h24v2h-24zM327 169h6v2h-6zM437 169h16v2h-16zM293 171h22v2h-22zM327 171h6v2h-6zM437 171h16v2h-16zM297 173h18v2h-18zM327 173h6v2h-6zM447 173h6v2h-6zM303 175h4v2h-4zM327 175h8v2h-8zM441 175h12v2h-12zM329 177h6v2h-6zM437 177h16v2h-16zM329 179h8v2h-8zM437 179h14v2h-14zM331 181h6v2h-6zM437 181h14v2h-14zM331 183h8v2h-8zM437 183h16v2h-16zM333 185h6v2h-6zM445 185h8v2h-8zM333 187h6v2h-6zM445 187h8v2h-8zM333 189h8v2h-8zM441 189h12v2h-12zM335 191h6v2h-6zM439 191h12v2h-12zM335 193h8v2h-8zM437 193h12v2h-12zM337 195h6v2h-6zM437 195h8v2h-8zM337 197h8v2h-8zM437 197h10v2h-10zM339 199h6v2h-6zM439 199h10v2h-10zM339 201h8v2h-8zM441 201h8v2h-8zM341 203h6v2h-6zM437 203h12v2h-12zM341 205h6v2h-6zM437 205h12v2h-12zM341 207h8v2h-8zM437 207h10v2h-10zM343 209h6v2h-6zM437 209h6v2h-6zM343 211h8v2h-8zM437 211h8v2h-8zM345 213h6v2h-6zM437 213h8v2h-8zM345 215h8v2h-8zM437 215h8v2h-8zM347 217h8v2h-8zM439 217h8v2h-8zM349 219h10v2h-10zM439 219h10v2h-10zM351 221h10v2h-10zM441 221h14v2h-14zM353 223h10v2h-10zM443 223h16v2h-16zM505 223h6v2h-6zM355 225h10v2h-10zM443 225h18v2h-18zM505 225h8v2h-8zM359 227h10v2h-10zM445 227h20v2h-20zM503 227h14v2h-14zM361 229h6v2h-6zM447 229h20v2h-20zM503 229h16v2h-16zM363 231h2v2h-2zM449 231h22v2h-22zM501 231h20v2h-20zM451 233h22v2h-22zM501 233h24v2h-24zM451 235h24v2h-24zM499 235h28v2h-28zM453 237h26v2h-26zM499 237h32v2h-32zM455 239h26v2h-26zM503 239h30v2h-30zM455 241h28v2h-28zM505 241h30v2h-30zM459 243h28v2h-28zM507 243h32v2h-32zM463 245h26v2h-26zM511 245h30v2h-30zM467 247h26v2h-26zM513 247h30v2h-30zM471 249h22v2h-22zM517 249h28v2h-28zM479 251h12v2h-12zM519 251h28v2h-28zM487 253h4v2h-4zM523 253h26v2h-26zM525 255h26v2h-26zM527 257h24v2h-24zM539 259h14v2h-14zM545 261h6v2h-6z"/>
<path fill="url(#s4)" d="M237 155h28v2h-28zM237 157h28v2h-28zM237 159h6v2h-6zM249 159h16v2h-16zM263 161h28v2h-28zM271 163h20v2h-20zM277 165h14v2h-14zM283 167h8v2h-8zM289 169h2v2h-2zM497 197h20v2h-20zM499 199h24v2h-24zM499 201h28v2h-28zM499 203h32v2h-32zM501 205h34v2h-34zM503 207h34v2h-34zM503 209h38v2h-38zM505 211h38v2h-38zM507 213h40v2h-40zM509 215h38v2h-38zM511 217h36v2h-36zM347 219h2v2h-2zM513 219h36v2h-36zM347 221h4v2h-4zM515 221h34v2h-34zM349 223h4v2h-4zM517 223h34v2h-34zM349 225h6v2h-6zM519 225h32v2h-32zM351 227h8v2h-8zM523 227h30v2h-30zM351 229h10v2h-10zM529 229h22v2h-22zM351 231h12v2h-12zM535 231h16v2h-16zM351 233h12v2h-12zM541 233h8v2h-8zM353 235h8v2h-8zM547 235h2v2h-2zM353 237h6v2h-6zM353 239h4v2h-4zM497 239h6v2h-6zM497 241h8v2h-8zM495 243h12v2h-12zM495 245h16v2h-16zM493 247h20v2h-20zM493 249h24v2h-24zM491 251h28v2h-28zM491 253h32v2h-32zM517 255h8v2h-8z"/>
<path fill="url(#s5)" d="M209 151h6v2h-6zM205 153h10v2h-10zM201 155h14v2h-14zM227 155h10v2h-10zM197 157h40v2h-40zM193 159h44v2h-44zM189 161h44v2h-44zM261 161h2v2h-2zM189 163h26v2h-26zM193 165h22v2h-22z"/>
<path fill="url(#s6)" d="M215 163h12v2h-12zM215 165h2v2h-2z"/>
<polygon points="498,198 510,198 517,200 514,203 505,203 499,200" fill="#000" />
<polygon points="514,219 522,217 535,217.5 541,222 541,228 528,228 518,224" fill="#000" />
<polygon points="509,206 522,204.5 540,208 548,213 546,216 530,214 512,211" fill="#000" />
<rect x="424" y="169" width="4" height="3" fill="#000"/><rect x="433" y="166" width="5" height="3" fill="#000"/>
<rect x="346.5" y="188.3" width="2" height="60" fill="#2a2a2a" opacity=".75"/>
<rect x="352" y="191.6" width="2" height="60" fill="#2a2a2a" opacity=".75"/>
<rect x="357.3" y="194.78" width="2" height="60" fill="#2a2a2a" opacity=".75"/>
<rect x="362.5" y="197.9" width="2" height="60" fill="#2a2a2a" opacity=".75"/>
<rect x="367.6" y="200.96" width="2" height="60" fill="#2a2a2a" opacity=".75"/>
<rect x="372.5" y="203.9" width="2" height="60" fill="#2a2a2a" opacity=".75"/>
<line x1="468" y1="240" x2="566" y2="264" stroke="#262626" stroke-width="2" opacity=".6"/>
<line x1="468" y1="234" x2="566" y2="258" stroke="#262626" stroke-width="2" opacity=".6"/>
<line x1="468" y1="228" x2="566" y2="252" stroke="#262626" stroke-width="2" opacity=".6"/>
<line x1="468" y1="222" x2="566" y2="246" stroke="#262626" stroke-width="2" opacity=".6"/>
<polyline points="485.1,163.3 487.8,164.5 490.5,165.6 493.2,166.7 495.9,167.9 498.5,169 501.2,170.2 503.8,171.4 506.5,172.6 509.1,173.9 511.8,175.2 514.5,176.5 517.3,177.9 520.1,179.4 523,180.8 525.9,182.3 528.8,183.7 531.6,185.2 534.4,186.7 537,188.2 539.7,189.6 542.3,191.1 545,192.6 547.7,194.1 550.5,195.6 553.4,197.1 556.4,198.7 559.3,200.3 562.1,201.8 564.8,203.3 567.3,204.8 569.5,206.2 571.6,207.6 573.6,209 575.5,210.3 577.4,211.7 579.2,213 581,214.4 582.9,215.7 584.7,217.1 586.5,218.4 588.2,219.8 589.9,221.2 591.6,222.7 593.3,224.2 595,225.7 596.7,227.3 598.4,228.9 600.1,230.6 601.8,232.3 603.5,234.1 605.1,235.8 606.6,237.5 607.9,239.2 609.1,240.8 610.2,242.3 611.1,243.8 611.9,245.3 612.7,246.9 613.4,248.4 614.2,250 615,251.7 615.7,253.3 616.4,255 617.1,256.6 617.7,258.3 618.3,260 618.9,261.6 619.3,263.3 619.8,264.9 620.1,266.5 620.5,268.1 620.7,269.5 620.9,270.9 621.1,272.3 621.2,273.8 621.3,275.6 621.3,277.5 621.3,279.8 621.2,282.4" fill="none" stroke="#606060" stroke-width="1" stroke-dasharray="6 1"/>
<polyline points="500.7,173.2 503.1,174.3 505.5,175.5 507.9,176.6 510.3,177.8 512.8,179.1 515.3,180.3 518,181.6 520.6,183 523.2,184.3 525.9,185.6 528.5,187 531.1,188.3 533.6,189.7 536,191 538.4,192.3 540.9,193.7 543.3,195.1 545.8,196.4 548.4,197.9 551.1,199.3 553.8,200.7 556.5,202.2 559.1,203.6 561.6,205 564,206.3 566.2,207.7 568.2,208.9 570.1,210.2 571.8,211.4 573.6,212.6 575.2,213.8 576.9,215.1 578.6,216.3 580.3,217.6 582,218.8 583.6,220 585.2,221.3 586.8,222.5 588.3,223.8 589.8,225.1 591.3,226.4 592.9,227.8 594.4,229.2 595.9,230.7 597.5,232.2 599,233.8 600.6,235.4 602,236.9 603.4,238.4 604.7,239.9 605.8,241.4 606.8,242.7 607.7,244 608.5,245.3 609.2,246.6 609.9,247.9 610.5,249.3 611.2,250.8 611.9,252.3 612.6,253.7 613.3,255.2 613.9,256.7 614.5,258.2 615,259.6 615.5,261.1 616,262.6 616.4,264 616.8,265.5 617.1,266.9 617.4,268.2 617.7,269.5 617.9,270.7 618,271.9 618.1,273.1 618.2,274.5 618.3,276.1 618.3,277.9 618.3,280 618.2,282.3" fill="none" stroke="#606060" stroke-width="1" stroke-dasharray="6 1"/>
<polyline points="514.9,183.5 517.3,184.7 519.8,185.9 522.2,187.1 524.6,188.4 527,189.6 529.4,190.8 531.6,192 533.9,193.3 536.1,194.5 538.3,195.7 540.6,197 542.8,198.2 545.2,199.5 547.6,200.8 550.1,202.2 552.6,203.5 555,204.8 557.4,206.1 559.8,207.4 561.9,208.6 563.9,209.8 565.8,210.9 567.5,212 569.1,213.2 570.7,214.3 572.2,215.4 573.8,216.5 575.3,217.6 576.9,218.8 578.4,219.9 579.9,221 581.4,222.1 582.9,223.3 584.3,224.4 585.7,225.5 587.1,226.7 588.4,227.8 589.8,229.1 591.1,230.3 592.5,231.6 593.9,233 595.3,234.3 596.7,235.7 598.1,237.2 599.5,238.6 600.7,239.9 601.9,241.3 602.9,242.5 603.8,243.7 604.6,244.8 605.3,245.9 606,247 606.6,248.1 607.2,249.3 607.8,250.5 608.4,251.9 609.1,253.2 609.7,254.5 610.3,255.9 610.8,257.2 611.4,258.5 611.9,259.8 612.4,261 612.8,262.3 613.2,263.6 613.6,264.9 613.9,266.1 614.2,267.4 614.4,268.6 614.7,269.7 614.8,270.7 615,271.7 615.1,272.7 615.2,273.8 615.2,275.1 615.3,276.5 615.3,278.2 615.3,280.1 615.2,282.2" fill="none" stroke="#606060" stroke-width="1" stroke-dasharray="6 1"/>
<polyline points="537.7,198.8 539.6,199.9 541.6,201 543.7,202.1 545.8,203.3 548,204.4 550.1,205.6 552.3,206.7 554.4,207.9 556.4,209 558.4,210.1 560.3,211.1 562,212.1 563.6,213.1 565.1,214 566.5,215 567.8,215.9 569.2,216.8 570.5,217.8 571.8,218.8 573.2,219.7 574.5,220.7 575.9,221.7 577.2,222.7 578.5,223.7 579.7,224.6 581,225.6 582.2,226.5 583.4,227.5 584.5,228.4 585.7,229.4 586.8,230.4 588,231.5 589.1,232.6 590.3,233.7 591.5,234.8 592.7,236 593.9,237.2 595.1,238.4 596.3,239.6 597.4,240.8 598.5,241.9 599.5,243 600.3,244.1 601.1,245.1 601.8,245.9 602.4,246.8 602.9,247.7 603.4,248.5 603.9,249.4 604.4,250.4 604.9,251.4 605.4,252.5 606,253.7 606.5,254.8 607,256 607.5,257.1 608,258.2 608.5,259.3 608.9,260.4 609.3,261.4 609.7,262.5 610,263.5 610.4,264.6 610.7,265.6 610.9,266.7 611.2,267.7 611.4,268.7 611.6,269.7 611.8,270.5 611.9,271.4 612,272.2 612.1,272.9 612.2,273.8 612.2,274.8 612.3,275.9 612.3,277.2 612.3,278.7 612.3,280.4 612.2,282.1" fill="none" stroke="#606060" stroke-width="1" stroke-dasharray="6 1"/>
<polyline points="558.4,213.5 559.9,214.4 561.3,215.2 562.6,216 563.8,216.8 565,217.6 566.1,218.4 567.2,219.1 568.4,219.9 569.5,220.8 570.6,221.6 571.8,222.5 573,223.3 574.1,224.2 575.2,225 576.4,225.8 577.4,226.6 578.5,227.5 579.5,228.3 580.6,229.1 581.5,229.9 582.5,230.7 583.5,231.5 584.4,232.3 585.4,233.2 586.4,234.1 587.4,235 588.4,236 589.4,236.9 590.4,237.9 591.5,238.9 592.5,240 593.5,241 594.5,242 595.4,243 596.3,243.9 597.1,244.9 597.8,245.7 598.5,246.5 599,247.3 599.5,247.9 599.9,248.6 600.4,249.3 600.8,250 601.1,250.7 601.5,251.4 602,252.2 602.4,253.1 602.8,254.1 603.3,255.1 603.8,256.1 604.2,257 604.6,258 605.1,258.9 605.5,259.8 605.8,260.7 606.2,261.6 606.5,262.5 606.8,263.3 607.1,264.2 607.4,265 607.6,265.9 607.9,266.8 608.1,267.6 608.3,268.4 608.5,269.3 608.6,270 608.8,270.8 608.9,271.5 609,272.1 609.1,272.7 609.1,273.3 609.2,274 609.2,274.7 609.3,275.6 609.3,276.6 609.3,277.8 609.3,279.1 609.3,280.5 609.3,282" fill="none" stroke="#606060" stroke-width="1" stroke-dasharray="6 1"/>
<polyline points="570.2,225 571.2,225.8 572.2,226.4 573.1,227.1 574,227.8 574.9,228.5 575.8,229.1 576.6,229.8 577.5,230.5 578.3,231.1 579.1,231.7 579.9,232.4 580.7,233 581.4,233.7 582.2,234.4 583,235.1 583.8,235.8 584.6,236.5 585.4,237.2 586.2,238 587,238.8 587.8,239.6 588.7,240.4 589.5,241.2 590.3,242.1 591.2,242.9 592,243.7 592.7,244.5 593.4,245.3 594.1,246.1 594.8,246.8 595.4,247.5 595.9,248.1 596.3,248.7 596.7,249.2 597.1,249.7 597.4,250.2 597.7,250.6 598,251.1 598.3,251.7 598.6,252.2 598.9,252.8 599.2,253.4 599.5,254.1 599.9,254.9 600.3,255.7 600.7,256.5 601,257.3 601.4,258.1 601.7,258.9 602.1,259.6 602.4,260.4 602.7,261.1 603,261.8 603.3,262.5 603.6,263.2 603.8,263.8 604,264.5 604.2,265.1 604.5,265.8 604.7,266.5 604.8,267.1 605,267.8 605.2,268.5 605.4,269.1 605.5,269.8 605.6,270.4 605.7,271 605.9,271.5 605.9,272 606,272.5 606.1,272.9 606.1,273.4 606.2,273.8 606.2,274.4 606.2,274.9 606.3,275.6 606.3,276.4 606.3,277.3 606.3,278.3" fill="none" stroke="#606060" stroke-width="1" stroke-dasharray="6 1"/>
<polyline points="582.3,238.5 582.9,239.1 583.5,239.6 584.1,240.2 584.7,240.7 585.3,241.3 585.9,241.9 586.5,242.5 587.1,243.1 587.7,243.7 588.3,244.3 588.9,244.9 589.5,245.5 590.1,246.1 590.6,246.6 591.1,247.2 591.6,247.7 592.1,248.3 592.5,248.8 592.9,249.2 593.3,249.7 593.6,250.1 593.9,250.5 594.2,250.8 594.4,251.1 594.6,251.4 594.8,251.8 595,252.1 595.2,252.4 595.4,252.7 595.6,253.1 595.8,253.4 596,253.8 596.2,254.2 596.5,254.7 596.7,255.1 596.9,255.6 597.2,256.2 597.5,256.8 597.8,257.4 598,258 598.3,258.6 598.6,259.1 598.8,259.7 599.1,260.2 599.3,260.8 599.6,261.3 599.8,261.8 600,262.4 600.2,262.9 600.4,263.3 600.6,263.8 600.8,264.3 600.9,264.7 601.1,265.2 601.3,265.6 601.4,266.1 601.5,266.6 601.7,267 601.8,267.5 602,267.9 602.1,268.4 602.2,268.9 602.3,269.3 602.4,269.8 602.5,270.2 602.6,270.6 602.7,271.1 602.8,271.5 602.9,271.9 602.9,272.2 603,272.5 603,272.8 603.1,273.1 603.1,273.4 603.1,273.7 603.2,274 603.2,274.3 603.2,274.7 603.2,275.1" fill="none" stroke="#606060" stroke-width="1" stroke-dasharray="6 1"/>
<polyline points="591.2,251.8 591.4,252.1 591.5,252.3 591.7,252.5 591.8,252.7 592,252.9 592.1,253 592.2,253.2 592.3,253.4 592.4,253.6 592.6,253.8 592.7,254 592.8,254.1 592.9,254.4 593,254.6 593.1,254.8 593.3,255 593.4,255.3 593.5,255.5 593.7,255.8 593.8,256.1 594,256.4 594.1,256.8 594.3,257.1 594.5,257.5 594.7,257.9 594.9,258.3 595.1,258.7 595.2,259.1 595.4,259.5 595.6,259.9 595.8,260.3 596,260.6 596.1,261 596.3,261.4 596.5,261.8 596.6,262.1 596.8,262.5 596.9,262.8 597.1,263.2 597.2,263.5 597.4,263.8 597.5,264.1 597.6,264.5 597.7,264.8 597.9,265.1 598,265.4 598.1,265.7 598.2,265.9 598.3,266.2 598.4,266.5 598.5,266.8 598.6,267.1 598.7,267.4 598.8,267.7 598.8,268 598.9,268.3 599,268.6 599.1,268.9 599.2,269.2 599.3,269.5 599.3,269.8 599.4,270.1 599.5,270.3 599.5,270.6 599.6,270.9 599.7,271.2 599.7,271.5 599.8,271.7 599.8,272 599.9,272.2 599.9,272.5 600,272.7 600,272.9 600,273.1 600.1,273.2 600.1,273.4 600.1,273.6 600.1,273.7 600.1,273.9" fill="none" stroke="#606060" stroke-width="1" stroke-dasharray="6 1"/>
<polyline points="592.3,259.9 592.4,260.1 592.5,260.4 592.6,260.6 592.7,260.8 592.9,261.1 593,261.3 593.1,261.5 593.2,261.7 593.3,261.9 593.4,262.1 593.5,262.3 593.5,262.6 593.6,262.8 593.7,263 593.8,263.2 593.9,263.4 594,263.6 594.1,263.8 594.2,264 594.2,264.2 594.3,264.3 594.4,264.5 594.5,264.7 594.6,264.9 594.6,265.1 594.7,265.3 594.8,265.4 594.8,265.6 594.9,265.8 595,265.9 595,266.1 595.1,266.3 595.2,266.4 595.2,266.6 595.3,266.7 595.3,266.9 595.4,267 595.4,267.2 595.5,267.3 595.5,267.5 595.6,267.6 595.6,267.8 595.7,268 595.7,268.1 595.8,268.3 595.8,268.4 595.9,268.6 595.9,268.8 596,268.9 596,269.1 596.1,269.2 596.1,269.4 596.2,269.6 596.2,269.7 596.3,269.9 596.3,270 596.4,270.2 596.4,270.4 596.4,270.5 596.5,270.7 596.5,270.8 596.5,271 596.6,271.1 596.6,271.3 596.7,271.5 596.7,271.6 596.7,271.8 596.8,271.9 596.8,272 596.8,272.2 596.8,272.3 596.9,272.5 596.9,272.6 596.9,272.7 596.9,272.9 597,273 597,273.1 597,273.2 597,273.3" fill="none" stroke="#606060" stroke-width="1" stroke-dasharray="6 1"/>
</g></g>
<rect x="494" y="15" width="13" height="19" fill="rgb(15,15,15)"/>
<rect x="507" y="15" width="14" height="19" fill="rgb(30,30,30)"/>
<rect x="521" y="15" width="13" height="19" fill="rgb(45,45,45)"/>
<rect x="534" y="15" width="13" height="19" fill="rgb(60,60,60)"/>
<rect x="547" y="15" width="14" height="19" fill="rgb(75,75,75)"/>
<rect x="561" y="15" width="13" height="19" fill="rgb(90,90,90)"/>
<rect x="574" y="15" width="14" height="19" fill="rgb(105,105,105)"/>
<rect x="588" y="15" width="13" height="19" fill="rgb(120,120,120)"/>
<rect x="601" y="15" width="13" height="19" fill="rgb(135,135,135)"/>
<rect x="614" y="15" width="14" height="19" fill="rgb(150,150,150)"/>
<rect x="628" y="15" width="13" height="19" fill="rgb(165,165,165)"/>
<rect x="641" y="15" width="14" height="19" fill="rgb(180,180,180)"/>
<rect x="655" y="15" width="13" height="19" fill="rgb(195,195,195)"/>
<rect x="668" y="15" width="13" height="19" fill="rgb(210,210,210)"/>
<rect x="681" y="15" width="14" height="19" fill="rgb(225,225,225)"/>
<rect x="695" y="15" width="13" height="19" fill="rgb(240,240,240)"/>
<rect x="708" y="15" width="14" height="19" fill="rgb(255,255,255)"/>
<rect x="480" y="12" width="1" height="24" fill="#fff"/>
<rect x="721" y="12" width="1" height="24" fill="#fff"/>
<rect x="528" y="34" width="1" height="3" fill="#fff"/>
<g fill="#fff"><use href="#g48" x="528" y="37"/><use href="#g46" x="534" y="37"/><use href="#g50" x="540" y="37"/></g>
<rect x="576" y="34" width="1" height="3" fill="#fff"/>
<g fill="#fff"><use href="#g48" x="576" y="37"/><use href="#g46" x="582" y="37"/><use href="#g52" x="588" y="37"/></g>
<rect x="624" y="34" width="1" height="3" fill="#fff"/>
<g fill="#fff"><use href="#g48" x="624" y="37"/><use href="#g46" x="630" y="37"/><use href="#g54" x="636" y="37"/></g>
<rect x="672" y="34" width="1" height="3" fill="#fff"/>
<g fill="#fff"><use href="#g48" x="672" y="37"/><use href="#g46" x="678" y="37"/><use href="#g56" x="684" y="37"/></g>
<g fill="#fff"><use href="#g48" x="480" y="1"/></g>
<g fill="#fff"><use href="#g49" x="715" y="1"/></g>
<polygon points="202.5,45.5 344.5,38.5 336.5,151.5 202.5,157.5" fill="none" stroke="#0ff" stroke-width="1"/>
<polygon points="326.5,36.5 470.5,33.5 466.5,151.5 327.5,152.5" fill="none" stroke="#0ff" stroke-width="1"/>
<polygon points="444.5,45.5 583.5,43.5 585.5,149.5 446.5,151.5" fill="none" stroke="#0ff" stroke-width="1"/>
<polygon points="203.5,140.5 339.5,134.5 339.5,241.4 207.5,249.5" fill="none" stroke="#0ff" stroke-width="1"/>
<polygon points="327.5,135.5 467.5,131.5 462.5,241.5 327.5,243.5" fill="none" stroke="#0ff" stroke-width="1"/>
<polygon points="449.5,134.5 589.5,133.5 585.6,243.5 449.5,244.5" fill="none" stroke="#0ff" stroke-width="1"/>
<polygon points="206.5,232.5 339.5,226.5 352.5,334.5 216.5,342.5" fill="none" stroke="#0ff" stroke-width="1"/>
<polygon points="326.5,227.46 459.5,224.5 466.5,330.65 331.5,335.1" fill="none" stroke="#0ff" stroke-width="1"/>
<polygon points="452.5,229.5 588.5,229.5 589.5,334.5 452.5,334.5" fill="none" stroke="#0ff" stroke-width="1"/>
<polygon points="210.5,322.5 350.5,317.5 353.5,425.5 214.5,430.5" fill="none" stroke="#0ff" stroke-width="1"/>
<polygon points="329.5,318.5 462.5,313.5 481.5,425.5 338.5,430.5" fill="none" stroke="#0ff" stroke-width="1"/>
<line x1="402.5" y1="232.5" x2="368.5" y2="198.5" stroke="#0f0" stroke-width="1"/>
<line x1="402.5" y1="232.5" x2="692.5" y2="284.5" stroke="#f00" stroke-width="1"/>
<line x1="402.5" y1="232.5" x2="372.5" y2="343.5" stroke="#00f" stroke-width="1"/>
<polygon points="454.5,319.5 591.5,320.5 594.5,427.5 450.5,427.5" fill="none" stroke="#f0f" stroke-width="1"/>
<polygon points="454.5,319.5 591.5,320.5 594.5,427.5 450.5,427.5" fill="none" stroke="#ff0" stroke-width="1" stroke-dasharray="4 4" stroke-dashoffset="4"/>
<rect x="0" y="410" width="72" height="14" fill="#fff"/>
<rect x="1" y="411" width="13" height="6" fill="#000"/>
<rect x="14" y="417" width="15" height="6" fill="#000"/>
<rect x="29" y="411" width="14" height="6" fill="#000"/>
<rect x="43" y="417" width="14" height="6" fill="#000"/>
<rect x="57" y="411" width="14" height="6" fill="#000"/>
<g fill="#fff"><use href="#g53" x="24" y="397"/><use href="#g107" x="36" y="397"/><use href="#g109" x="42" y="397"/></g>
<g fill="#fff"><use href="#g77" x="79" y="411"/><use href="#g83" x="85" y="411"/><use href="#g73" x="91" y="411"/><use href="#g58" x="97" y="411"/><use href="#g50" x="115" y="411"/><use href="#g48" x="121" y="411"/><use href="#g48" x="127" y="411"/><use href="#g48" x="133" y="411"/><use href="#g45" x="139" y="411"/><use href="#g51" x="145" y="411"/><use href="#g49" x="151" y="411"/><use href="#g48" x="157" y="411"/><use href="#g84" x="163" y="411"/><use href="#g49" x="169" y="411"/><use href="#g50" x="175" y="411"/><use href="#g58" x="181" y="411"/><use href="#g48" x="187" y="411"/><use href="#g56" x="193" y="411"/><use href="#g58" x="199" y="411"/><use href="#g51" x="205" y="411"/><use href="#g48" x="211" y="411"/><use href="#g46" x="217" y="411"/><use href="#g48" x="223" y="411"/><use href="#g48" x="229" y="411"/><use href="#g116" x="241" y="411"/><use href="#g111" x="247" y="411"/><use href="#g50" x="259" y="411"/><use href="#g48" x="265" y="411"/><use href="#g48" x="271" y="411"/><use href="#g48" x="277" y="411"/><use href="#g45" x="283" y="411"/><use href="#g51" x="289" y="411"/><use href="#g49" x="295" y="411"/><use href="#g48" x="301" y="411"/><use href="#g84" x="307" y="411"/><use href="#g49" x="313" y="411"/><use href="#g50" x="319" y="411"/><use href="#g58" x="325" y="411"/><use href="#g49" x="331" y="411"/><use href="#g57" x="337" y="411"/><use href="#g58" x="343" y="411"/><use href="#g53" x="349" y="411"/><use href="#g50" x="355" y="411"/><use href="#g46" x="361" y="411"/><use href="#g48" x="367" y="411"/><use href="#g48" x="373" y="411"/><use href="#g40" x="385" y="411"/><use href="#g54" x="391" y="411"/><use href="#g47" x="397" y="411"/><use href="#g48" x="403" y="411"/><use href="#g49" x="409" y="411"/><use href="#g52" x="415" y="411"/><use href="#g56" x="421" y="411"/><use href="#g56" x="427" y="411"/><use href="#g51" x="433" y="411"/><use href="#g54" x="439" y="411"/><use href="#g51" x="445" y="411"/><use href="#g52" x="451" y="411"/><use href="#g51" x="457" y="411"/><use href="#g116" x="469" y="411"/><use href="#g111" x="475" y="411"/><use href="#g54" x="487" y="411"/><use href="#g47" x="493" y="411"/><use href="#g48" x="499" y="411"/><use href="#g49" x="505" y="411"/><use href="#g52" x="511" y="411"/><use href="#g56" x="517" y="411"/><use href="#g56" x="523" y="411"/><use href="#g51" x="529" y="411"/><use href="#g55" x="535" y="411"/><use href="#g48" x="541" y="411"/><use href="#g50" x="547" y="411"/><use href="#g53" x="553" y="411"/><use href="#g41" x="559" y="411"/></g>
<g fill="#fff"><use href="#g79" x="7" y="434"/><use href="#g80" x="13" y="434"/><use href="#g78" x="19" y="434"/><use href="#g95" x="25" y="434"/><use href="#g51" x="31" y="434"/><use href="#g49" x="37" y="434"/><use href="#g48" x="43" y="434"/><use href="#g66" x="49" y="434"/><use href="#g95" x="55" y="434"/><use href="#g75" x="61" y="434"/><use href="#g76" x="67" y="434"/></g>
<g fill="#fff"><use href="#g51" x="7" y="448"/><use href="#g120" x="13" y="448"/><use href="#g52" x="19" y="448"/><use href="#g95" x="25" y="448"/><use href="#g49" x="31" y="448"/><use href="#g109" x="43" y="448"/><use href="#g111" x="49" y="448"/><use href="#g115" x="55" y="448"/><use href="#g97" x="61" y="448"/><use href="#g105" x="67" y="448"/><use href="#g99" x="73" y="448"/><use href="#g105" x="85" y="448"/><use href="#g110" x="91" y="448"/><use href="#g102" x="103" y="448"/><use href="#g105" x="109" y="448"/><use href="#g108" x="115" y="448"/><use href="#g116" x="121" y="448"/><use href="#g101" x="127" y="448"/><use href="#g114" x="133" y="448"/><use href="#g52" x="145" y="448"/></g>
</svg></body></html>
